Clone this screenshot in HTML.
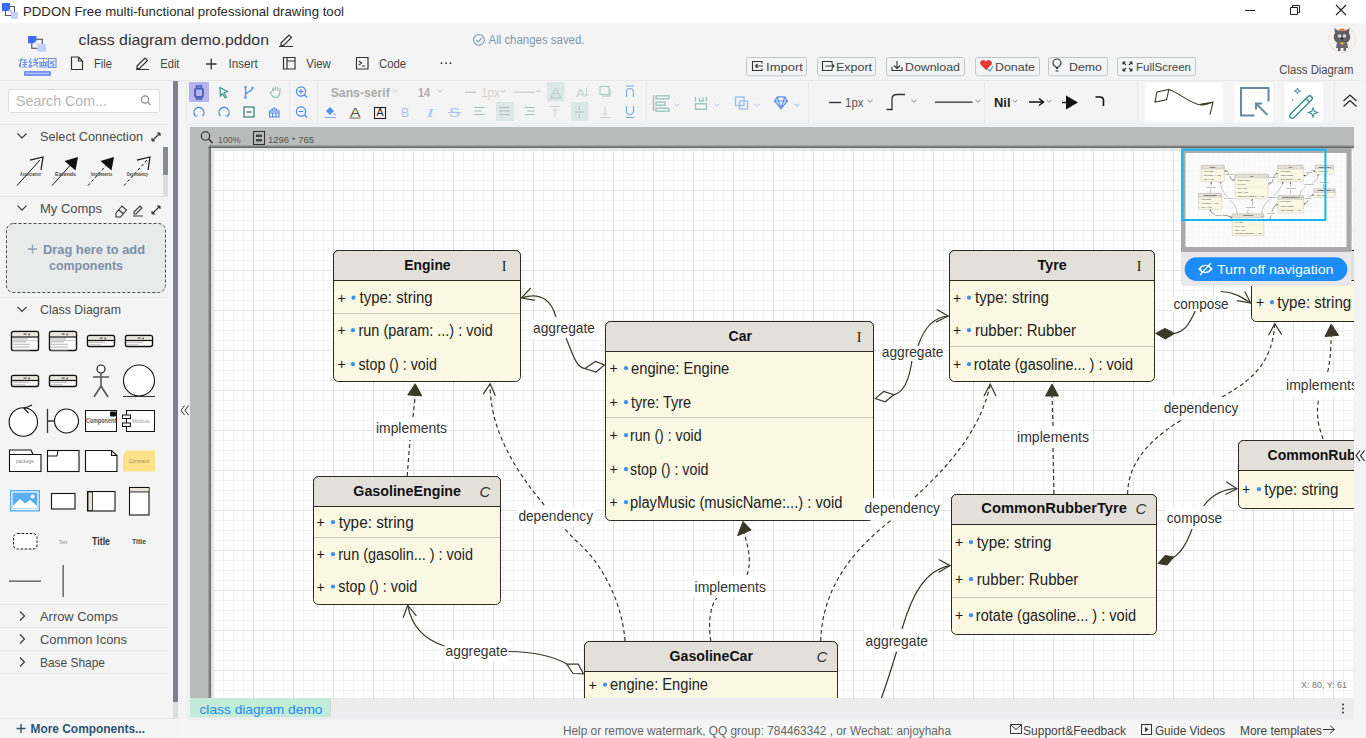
<!DOCTYPE html><html><head><meta charset="utf-8"><style>html,body{margin:0;padding:0;}body{width:1366px;height:738px;overflow:hidden;background:#f4f4f4;position:relative;font-family:"Liberation Sans",sans-serif;}svg{position:absolute;left:0;top:0;}</style></head><body>
<svg width="1366" height="738" viewBox="0 0 1366 738">
<rect width="1366" height="738" fill="#f4f4f4"/>
<rect x="0" y="0" width="1366" height="23" fill="#ffffff"/>
<rect x="5.5" y="6.5" width="9" height="9" fill="none" stroke="#555" stroke-width="1"/>
<rect x="2" y="3" width="8" height="8" fill="#3a6cf4"/>
<rect x="11" y="12" width="7" height="7" fill="#c3d0fb"/>
<path d="M9,10 L12,13" stroke="#c3d0fb" stroke-width="3"/>
<text x="23.0" y="16.0" font-family="Liberation Sans" font-size="13" font-weight="normal" font-style="normal" fill="#2a2a2a" textLength="321.0" lengthAdjust="spacingAndGlyphs">PDDON Free multi-functional professional drawing tool</text>
<rect x="1245" y="10" width="10" height="1" fill="#222"/>
<path d="M1290.5,7.5 h7 v7 h-7 z M1292.5,7.5 v-2 h7 v7 h-2" fill="none" stroke="#222" stroke-width="1"/>
<path d="M1336,5 L1346,15 M1346,5 L1336,15" stroke="#222" stroke-width="1.1"/>
<rect x="31.8" y="39.3" width="10.5" height="9" fill="none" stroke="#5a5a6a" stroke-width="1.2"/>
<path d="M28,36 H36.4 V41 Q36.4,43.2 34,43.2 H28 Z" fill="#3b6df2"/>
<path d="M35,42 L40,47" stroke="#dfe6fc" stroke-width="3"/>
<rect x="37.4" y="44" width="8.5" height="7.7" fill="#c0cffb"/>
<path d="M18.5,60 H27 M22,58 L19,66.5 M20.5,63 V67.5 M22.5,62.5 H27 M24.8,60.5 V67 M22.5,64.5 H27 M22,67 H27.5" fill="none" stroke="#6e8ff0" stroke-width="1.1"/>
<path d="M31,58.5 L29,62 L31.5,62 L29,66 L32,65.5 M29,67.5 L32.5,66.5 M33,60 H37.5 M33,62.5 H38 M35,58 L37.5,67.5 M33,66 L38,63 M37,58.5 L38,59.5" fill="none" stroke="#6e8ff0" stroke-width="1.1"/>
<path d="M39,58.5 H47.5 M40,61 V67 H47 V61 M41.5,62.5 H45.5 V65.5 H41.5 Z M43.5,60 V66" fill="none" stroke="#6e8ff0" stroke-width="1.1"/>
<path d="M48.5,58.5 H56 V67.5 H48.5 Z M50,61 L54.5,65.5 M54.5,60.5 L50,64 M50.5,66 H54" fill="none" stroke="#6e8ff0" stroke-width="1.1"/>
<rect x="24" y="71" width="27" height="5" rx="1" fill="#7293f2"/>
<rect x="26" y="72.8" width="23" height="1.2" fill="#b9c9f8"/>
<text x="78.5" y="45.0" font-family="Liberation Sans" font-size="15.5" font-weight="normal" font-style="normal" fill="#333" textLength="190.5" lengthAdjust="spacingAndGlyphs">class diagram demo.pddon</text>
<path d="M281,43 L289,35 L291.5,37.5 L283.5,45.5 L281,45.5 Z M279,46.5 H293" fill="none" stroke="#333" stroke-width="1.2"/>
<path d="M71.5,57 H78.5 L82.5,61 V69.5 H71.5 Z M78.5,57 V61 H82.5" fill="none" stroke="#333" stroke-width="1.2"/>
<text x="94.0" y="68.0" font-family="Liberation Sans" font-size="12.5" font-weight="normal" font-style="normal" fill="#444" textLength="18.0" lengthAdjust="spacingAndGlyphs">File</text>
<path d="M137,66 L145,58 L147.5,60.5 L139.5,68.5 L137,68.5 Z M136,69.5 H149" fill="none" stroke="#333" stroke-width="1.2"/>
<text x="160.2" y="68.0" font-family="Liberation Sans" font-size="12.5" font-weight="normal" font-style="normal" fill="#444" textLength="19.3" lengthAdjust="spacingAndGlyphs">Edit</text>
<path d="M206,64 H216.5 M211.2,58.5 V69.5" fill="none" stroke="#333" stroke-width="1.3"/>
<text x="228.4" y="68.0" font-family="Liberation Sans" font-size="12.5" font-weight="normal" font-style="normal" fill="#444" textLength="29.3" lengthAdjust="spacingAndGlyphs">Insert</text>
<path d="M283.5,57.5 H295 V69 H283.5 Z M287,57.5 V69 M287,61 H295" fill="none" stroke="#333" stroke-width="1.2"/>
<text x="306.3" y="68.0" font-family="Liberation Sans" font-size="12.5" font-weight="normal" font-style="normal" fill="#444" textLength="24.5" lengthAdjust="spacingAndGlyphs">View</text>
<path d="M356.5,57.5 H368 V69 H356.5 Z M359,61 L361.5,63 L359,65 M362,66 H365" fill="none" stroke="#333" stroke-width="1.2"/>
<text x="379.0" y="68.0" font-family="Liberation Sans" font-size="12.5" font-weight="normal" font-style="normal" fill="#444" textLength="27.2" lengthAdjust="spacingAndGlyphs">Code</text>
<circle cx="441.5" cy="63.2" r="0.9" fill="#333"/>
<circle cx="446" cy="63.2" r="0.9" fill="#333"/>
<circle cx="450.5" cy="63.2" r="0.9" fill="#333"/>
<circle cx="478.9" cy="39.9" r="5.4" fill="none" stroke="#7f97a8" stroke-width="1.1"/>
<path d="M476.3,40 L478.3,42 L481.6,37.8" fill="none" stroke="#7f97a8" stroke-width="1.1"/>
<text x="488.5" y="44.0" font-family="Liberation Sans" font-size="12" font-weight="normal" font-style="normal" fill="#7f97a8" textLength="96.0" lengthAdjust="spacingAndGlyphs">All changes saved.</text>
<rect x="746.5" y="57.5" width="60" height="18" rx="2" fill="#f3f4f4" stroke="#c3c6c8" stroke-width="1"/>
<rect x="747" y="75.5" width="59" height="1" fill="#e0e2e3"/>
<text x="766.0" y="71.3" font-family="Liberation Sans" font-size="11.8" font-weight="normal" font-style="normal" fill="#444" textLength="37.0" lengthAdjust="spacingAndGlyphs">Import</text>
<rect x="817.5" y="57.5" width="58" height="18" rx="2" fill="#f3f4f4" stroke="#c3c6c8" stroke-width="1"/>
<rect x="818" y="75.5" width="57" height="1" fill="#e0e2e3"/>
<text x="836.0" y="71.3" font-family="Liberation Sans" font-size="11.8" font-weight="normal" font-style="normal" fill="#444" textLength="36.0" lengthAdjust="spacingAndGlyphs">Export</text>
<rect x="886.5" y="57.5" width="78" height="18" rx="2" fill="#f3f4f4" stroke="#c3c6c8" stroke-width="1"/>
<rect x="887" y="75.5" width="77" height="1" fill="#e0e2e3"/>
<text x="905.0" y="71.3" font-family="Liberation Sans" font-size="11.8" font-weight="normal" font-style="normal" fill="#444" textLength="55.0" lengthAdjust="spacingAndGlyphs">Download</text>
<rect x="975.5" y="57.5" width="64" height="18" rx="2" fill="#f3f4f4" stroke="#c3c6c8" stroke-width="1"/>
<rect x="976" y="75.5" width="63" height="1" fill="#e0e2e3"/>
<text x="995.0" y="71.3" font-family="Liberation Sans" font-size="11.8" font-weight="normal" font-style="normal" fill="#444" textLength="40.0" lengthAdjust="spacingAndGlyphs">Donate</text>
<rect x="1048.5" y="57.5" width="59" height="18" rx="2" fill="#f3f4f4" stroke="#c3c6c8" stroke-width="1"/>
<rect x="1049" y="75.5" width="58" height="1" fill="#e0e2e3"/>
<text x="1069.0" y="71.3" font-family="Liberation Sans" font-size="11.8" font-weight="normal" font-style="normal" fill="#444" textLength="33.0" lengthAdjust="spacingAndGlyphs">Demo</text>
<rect x="1117.5" y="57.5" width="78" height="18" rx="2" fill="#f3f4f4" stroke="#c3c6c8" stroke-width="1"/>
<rect x="1118" y="75.5" width="77" height="1" fill="#e0e2e3"/>
<text x="1136.0" y="71.3" font-family="Liberation Sans" font-size="11.8" font-weight="normal" font-style="normal" fill="#444" textLength="55.0" lengthAdjust="spacingAndGlyphs">FullScreen</text>
<path d="M762,63.5 V61.5 H752.5 V70.5 H762 V68.5 M755.5,66 H763 M757.5,64 L755.5,66 L757.5,68" fill="none" stroke="#333" stroke-width="1.1"/>
<path d="M832,63.5 V61.5 H822.5 V70.5 H832 V68.5 M825.5,66 H834 M832,64 L834,66 L832,68" fill="none" stroke="#333" stroke-width="1.1"/>
<path d="M897,61 V68 M894,65.5 L897,68.5 L900,65.5 M892,67 V70.5 H902 V67" fill="none" stroke="#333" stroke-width="1.1"/>
<path d="M986,70 L980.5,64.5 A3,3 0 0 1 986,61.8 A3,3 0 0 1 991.5,64.5 Z" fill="#e53935"/>
<path d="M987,68.5 L990,71 L993,66" fill="none" stroke="#3f9ae8" stroke-width="1.1"/>
<path d="M1056.5,69 V67.5 C1054,66 1053,64.5 1053,63 A4,4 0 0 1 1061,63 C1061,64.5 1060,66 1057.5,67.5 V69 M1055.5,71 H1058.5" fill="none" stroke="#333" stroke-width="1.1"/>
<path d="M1123,62 L1126,65 M1123,62 H1125.5 M1123,62 V64.5 M1132,62 L1129,65 M1132,62 H1129.5 M1132,62 V64.5 M1123,71 L1126,68 M1123,71 H1125.5 M1123,71 V68.5 M1132,71 L1129,68 M1132,71 H1129.5 M1132,71 V68.5" fill="none" stroke="#333" stroke-width="1.1"/>
<circle cx="1342" cy="39" r="13.6" fill="#f6f2f2" stroke="#e8d8d8" stroke-width="0.6"/>
<path d="M1335,33 L1334.5,28 L1338,30.5 H1346 L1349.5,28 L1349,33 Q1352,38 1348,42 L1336,42 Q1332,38 1335,33 Z" fill="#5f5f62"/>
<path d="M1338,30.5 Q1342,26.5 1346,30.5 Z" fill="#e8702a"/>
<circle cx="1339.5" cy="36" r="1.8" fill="#ddd"/><circle cx="1344.5" cy="36" r="1.8" fill="#ddd"/>
<circle cx="1342" cy="38.6" r="0.9" fill="#111"/>
<path d="M1337,42 H1347 L1348,48 H1336 Z" fill="#6a6a6d"/>
<path d="M1339,42.5 L1342,45 L1345,42.5 Z" fill="#e4b23a"/>
<rect x="1338" y="48" width="2.5" height="3" fill="#666"/><rect x="1343.5" y="48" width="2.5" height="3" fill="#666"/>
<text x="1279.3" y="74.0" font-family="Liberation Sans" font-size="12.5" font-weight="normal" font-style="normal" fill="#484848" textLength="74.0" lengthAdjust="spacingAndGlyphs">Class Diagram</text>
<rect x="0" y="80" width="1366" height="1" fill="#e8e8e8"/>
<rect x="180" y="81" width="1186" height="43" fill="#f4f4f4"/>
<rect x="180" y="123" width="1186" height="4" fill="#f0f1f3"/>
<rect x="186" y="82" width="1" height="40" fill="#e9e9e9"/>
<rect x="289" y="82" width="1" height="40" fill="#e9e9e9"/>
<rect x="317" y="82" width="1" height="40" fill="#e9e9e9"/>
<rect x="646" y="82" width="1" height="40" fill="#e9e9e9"/>
<rect x="808" y="82" width="1" height="40" fill="#e9e9e9"/>
<rect x="984" y="82" width="1" height="40" fill="#e9e9e9"/>
<rect x="1137" y="82" width="1" height="40" fill="#e9e9e9"/>
<rect x="1334" y="82" width="1" height="40" fill="#e9e9e9"/>
<rect x="189" y="82" width="20" height="20" fill="#b4b4ee"/>
<rect x="195" y="88.5" width="8" height="8.5" rx="2" fill="none" stroke="#4b60b5" stroke-width="1.8"/>
<path d="M196.5,88 V86 H201.5 V88 M196.5,97.5 V99 H201.5 V97.5" fill="none" stroke="#4b60b5" stroke-width="1.5"/>
<path d="M220,87.5 L227.5,91.5 L224,93 L226.5,97 L225,97.8 L222.5,93.8 L220.5,96 Z" fill="none" stroke="#3e9488" stroke-width="1.2"/>
<path d="M245.5,87 V97.5 M245.5,95 C246,91 252.5,92 252.5,88" fill="none" stroke="#5b8fe8" stroke-width="1.3"/><circle cx="245.5" cy="87" r="1.2" fill="#5b8fe8"/><circle cx="252.5" cy="88" r="1.2" fill="#5b8fe8"/><circle cx="245.5" cy="97.5" r="1.2" fill="#5b8fe8"/>
<path d="M270,93 L273,96.5 Q275,98 278,97 Q280,95 280,91 V88 M277.5,91 V87 M275.5,90.5 V86.5 M273.5,91 V87.5 L272,91.5 L270,93" fill="none" stroke="#8cc0b8" stroke-width="1.1"/>
<circle cx="301" cy="91.5" r="4.6" fill="none" stroke="#4d86e8" stroke-width="1.2"/><path d="M304.3,94.8 L307,97.5" stroke="#4d86e8" stroke-width="1.3"/>
<path d="M298.6,91.5 H303.4" stroke="#4d86e8" stroke-width="1.1"/>
<path d="M301,89.1 V93.9" stroke="#4d86e8" stroke-width="1.1"/>
<circle cx="301" cy="111.5" r="4.6" fill="none" stroke="#4d86e8" stroke-width="1.2"/><path d="M304.3,114.8 L307,117.5" stroke="#4d86e8" stroke-width="1.3"/>
<path d="M298.6,111.5 H303.4" stroke="#4d86e8" stroke-width="1.1"/>
<path d="M195,115.5 A5,5 0 1 1 202.5,116" fill="none" stroke="#4d86e8" stroke-width="1.3"/><path d="M194,114 L195.5,117 L197.5,115" fill="none" stroke="#4d86e8" stroke-width="1"/>
<path d="M220.5,116 A5,5 0 1 1 228,115.5" fill="none" stroke="#4d86e8" stroke-width="1.3"/><path d="M229,114 L227.5,117 L225.5,115" fill="none" stroke="#4d86e8" stroke-width="1"/>
<rect x="244" y="107" width="10" height="10" fill="none" stroke="#3f8a7e" stroke-width="1.3"/><path d="M246.5,112 H251.5" stroke="#3f8a7e" stroke-width="1.5"/>
<path d="M269.5,117 V111 H279 V117 Z M269.5,113 H279 M272.5,113 V117 M276,113 V117 M272,111 V109 H276.5 V111 M274.2,109 V107" fill="none" stroke="#4d86e8" stroke-width="1.1"/>
<text x="330.7" y="96.8" font-family="Liberation Sans" font-size="13" font-weight="bold" font-style="normal" fill="#ababab" textLength="59.1" lengthAdjust="spacingAndGlyphs">Sans-serif</text>
<path d="M393.0,89.7 L395.5,92.3 L398.0,89.7" fill="none" stroke="#bbb" stroke-width="0.9"/>
<text x="418.0" y="96.8" font-family="Liberation Sans" font-size="13" font-weight="bold" font-style="normal" fill="#b5aaa8" textLength="12.2" lengthAdjust="spacingAndGlyphs">14</text>
<path d="M437.5,89.7 L440,92.3 L442.5,89.7" fill="none" stroke="#bbb" stroke-width="0.9"/>
<rect x="465" y="91.5" width="11" height="1.3" fill="#c8c8c8"/>
<text x="481.0" y="97.0" font-family="Liberation Sans" font-size="13" font-weight="normal" font-style="normal" fill="#d9d3cb" textLength="19.0" lengthAdjust="spacingAndGlyphs">1px</text>
<path d="M500.5,89.7 L503,92.3 L505.5,89.7" fill="none" stroke="#bbb" stroke-width="0.9"/>
<rect x="514" y="91.5" width="21" height="1.2" fill="#c8c8c8"/>
<path d="M535.5,89.7 L538,92.3 L540.5,89.7" fill="none" stroke="#bbb" stroke-width="0.9"/>
<rect x="547" y="82" width="17.5" height="19.5" fill="#dde7e6"/>
<text x="550.5" y="97.0" font-family="Liberation Sans" font-size="13" font-weight="normal" font-style="normal" fill="#bcd3d0" textLength="10.5" lengthAdjust="spacingAndGlyphs">A</text>
<rect x="550" y="97.5" width="11" height="1" fill="#a9c6c2"/>
<text x="576.0" y="97.0" font-family="Liberation Sans" font-size="11" font-weight="normal" font-style="normal" fill="#c6d3d3" textLength="9.0" lengthAdjust="spacingAndGlyphs">A</text>
<path d="M586.5,87 V96 M584.5,94 L586.5,96.5 L588.5,94" fill="none" stroke="#c6d3d3" stroke-width="1"/>
<rect x="600" y="86.5" width="9" height="8" fill="none" stroke="#a8cac6" stroke-width="1.1"/><path d="M610,89 V96 H602" fill="none" stroke="#a8cac6" stroke-width="1.1"/>
<path d="M626,86 H634 M626.5,97 V92 A3.5,3.5 0 0 1 633.5,92 V97" fill="none" stroke="#7aa6ea" stroke-width="1.1"/>
<path d="M326,111 L330,107 L334,111 L330,115 Z" fill="#5a90ea"/><path d="M334.5,113 L335.5,115 L333.5,115 Z" fill="#5a90ea"/><rect x="324.7" y="117" width="11" height="1" fill="#7aa6ea"/>
<text x="350.0" y="116.5" font-family="Liberation Sans" font-size="12" font-weight="normal" font-style="normal" fill="#595740" textLength="10.5" lengthAdjust="spacingAndGlyphs">A</text>
<rect x="349.5" y="117.5" width="11" height="1.2" fill="#888070"/>
<rect x="374.5" y="107.5" width="11" height="11" fill="none" stroke="#222" stroke-width="1.1"/>
<text x="376.5" y="116.3" font-family="Liberation Sans" font-size="10" font-weight="normal" font-style="normal" fill="#222" textLength="7.0" lengthAdjust="spacingAndGlyphs">A</text>
<text x="401.0" y="117.0" font-family="Liberation Sans" font-size="12.5" font-weight="normal" font-style="normal" fill="#a9c4f0" textLength="8.0" lengthAdjust="spacingAndGlyphs">B</text>
<text x="426.0" y="117.0" font-family="Liberation Serif" font-size="12.5" font-weight="normal" font-style="italic" fill="#a9c4f0" textLength="8.0" lengthAdjust="spacingAndGlyphs">I</text>
<text x="449.0" y="117.0" font-family="Liberation Sans" font-size="12.5" font-weight="normal" font-style="normal" fill="#a9c4f0" textLength="11.0" lengthAdjust="spacingAndGlyphs">S</text>
<rect x="448" y="112" width="13" height="1" fill="#a9c4f0"/>
<rect x="496" y="102" width="18" height="19" fill="#dde7e6"/><rect x="571" y="102" width="17.5" height="19" fill="#dde7e6"/>
<rect x="474.5" y="107.0" width="10" height="1" fill="#9ebfba"/>
<rect x="474.5" y="110.5" width="7" height="1" fill="#9ebfba"/>
<rect x="474.5" y="114.0" width="10" height="1" fill="#9ebfba"/>
<rect x="499.5" y="107.0" width="10" height="1" fill="#9ebfba"/>
<rect x="499.5" y="110.5" width="10" height="1" fill="#9ebfba"/>
<rect x="499.5" y="114.0" width="10" height="1" fill="#9ebfba"/>
<rect x="524.5" y="107.0" width="10" height="1" fill="#9ebfba"/>
<rect x="527.5" y="110.5" width="7" height="1" fill="#9ebfba"/>
<rect x="524.5" y="114.0" width="10" height="1" fill="#9ebfba"/>
<path d="M550,106.5 H560 M555,109 V117 M552.5,111 L555,108.5 L557.5,111" fill="none" stroke="#c6d3d3" stroke-width="1"/>
<path d="M574.5,112 H584.5 M579.5,106 V110 M579.5,114 V118" fill="none" stroke="#a8c6c2" stroke-width="1"/>
<path d="M600,117.5 H610 M605,106.5 V115 M602.5,113 L605,115.5 L607.5,113" fill="none" stroke="#c6d3d3" stroke-width="1"/>
<path d="M626.5,106 V111 A3.5,3.5 0 0 0 633.5,111 V106 M626,117.5 H634" fill="none" stroke="#7aa6ea" stroke-width="1.1"/>
<path d="M653.5,95 V111" stroke="#94c4bc" stroke-width="1.4"/><rect x="656" y="95.8" width="13" height="3" fill="none" stroke="#94c4bc" stroke-width="1.3"/><rect x="656" y="102.2" width="9" height="3" fill="none" stroke="#94c4bc" stroke-width="1.3"/><rect x="656" y="108.2" width="13" height="3" fill="none" stroke="#94c4bc" stroke-width="1.3"/>
<path d="M674.5,103.7 L677,106.3 L679.5,103.7" fill="none" stroke="#a9c8f0" stroke-width="0.9"/>
<path d="M695.5,97 V101.5 M706.5,97 V101.5 M699.5,97.5 V101 H703 V97.5" fill="none" stroke="#94c4bc" stroke-width="1.3"/><rect x="695.5" y="103.8" width="11" height="5.5" fill="none" stroke="#94c4bc" stroke-width="1.3"/>
<path d="M714.5,103.7 L717,106.3 L719.5,103.7" fill="none" stroke="#a9c8f0" stroke-width="0.9"/>
<rect x="735.5" y="97" width="8.5" height="8.5" fill="none" stroke="#9bbcf0" stroke-width="1.3"/><rect x="739.5" y="101" width="8" height="8" fill="none" stroke="#9bbcf0" stroke-width="1.3"/>
<path d="M754.5,103.7 L757,106.3 L759.5,103.7" fill="none" stroke="#9bbcf0" stroke-width="0.9"/>
<path d="M774.5,101 L777.5,96.8 H784.5 L787.5,101 L781,108.5 Z M774.5,101 H787.5 M778.5,101 L781,108.5 L783.5,101 M777.5,96.8 L778.5,101 M784.5,96.8 L783.5,101" fill="none" stroke="#5a90ea" stroke-width="1.2"/>
<path d="M794.5,103.7 L797,106.3 L799.5,103.7" fill="none" stroke="#7aa6ea" stroke-width="0.9"/>
<rect x="829" y="101.8" width="12" height="1.4" fill="#333"/>
<text x="845.0" y="107.0" font-family="Liberation Sans" font-size="13" font-weight="normal" font-style="normal" fill="#555" textLength="18.5" lengthAdjust="spacingAndGlyphs">1px</text>
<path d="M867.5,99.7 L870,102.3 L872.5,99.7" fill="none" stroke="#888" stroke-width="0.9"/>
<path d="M886.5,109.5 H892 V99 Q892,94.5 897,94.5 H905" fill="none" stroke="#333" stroke-width="1.3"/>
<path d="M911.5,99.7 L914,102.3 L916.5,99.7" fill="none" stroke="#888" stroke-width="0.9"/>
<rect x="935" y="101.5" width="37.5" height="1.3" fill="#333"/>
<path d="M975.5,99.7 L978,102.3 L980.5,99.7" fill="none" stroke="#888" stroke-width="0.9"/>
<text x="994.0" y="107.0" font-family="Liberation Sans" font-size="13" font-weight="bold" font-style="normal" fill="#222" textLength="16.5" lengthAdjust="spacingAndGlyphs">Nil</text>
<path d="M1012.5,99.7 L1015,102.3 L1017.5,99.7" fill="none" stroke="#888" stroke-width="0.9"/>
<path d="M1029,102 H1043 M1039,98.5 L1043.5,102 L1039,105.5" fill="none" stroke="#111" stroke-width="1.4"/>
<path d="M1046.5,99.7 L1049,102.3 L1051.5,99.7" fill="none" stroke="#888" stroke-width="0.9"/>
<path d="M1062,102.5 H1068" stroke="#111" stroke-width="1.4"/><path d="M1066,95.5 L1078,102.5 L1066,109.5 Z" fill="#111"/>
<path d="M1095.5,97 H1100 Q1103.5,97 1103.5,100.5 V106" fill="none" stroke="#111" stroke-width="1.6"/>
<rect x="1145" y="83" width="78" height="38" fill="#ffffff"/>
<path d="M1155,102.1 L1157,91.9 L1168.9,89.5 L1166.5,99.8 Z M1168.9,89.5 C1180,93 1190,104 1201,105 C1206,105.5 1210,103 1213,102.1 M1210,114.6 L1213,102.1 L1200.4,104.3" fill="none" stroke="#3b3a22" stroke-width="1.1"/>
<rect x="1234.5" y="83" width="38.5" height="38" fill="#ffffff"/>
<path d="M1268.5,101.5 V88 H1241 V115.5 H1254.5" fill="none" stroke="#6688a0" stroke-width="2"/><path d="M1267.5,115 L1257,104.5 M1256,109.5 V103.5 H1262" fill="none" stroke="#6688a0" stroke-width="2"/>
<rect x="1284.5" y="83" width="38.5" height="38" fill="#ffffff"/>
<path d="M1290.5,114 L1308,96.5 A2,2 0 0 1 1311.5,100 L1294,117.5 A2,2 0 0 1 1290.5,114 Z M1306,98.5 L1309.5,102" fill="none" stroke="#3a8f92" stroke-width="1.4"/>
<path d="M1297.5,88 L1298.3,90.2 L1300.5,91 L1298.3,91.8 L1297.5,94 L1296.7,91.8 L1294.5,91 L1296.7,90.2 Z" fill="none" stroke="#3a8f92" stroke-width="1"/>
<path d="M1313,108 L1314.2,111.3 L1317.5,112.5 L1314.2,113.7 L1313,117 L1311.8,113.7 L1308.5,112.5 L1311.8,111.3 Z" fill="none" stroke="#3a8f92" stroke-width="1.1"/>
<circle cx="1292.5" cy="100" r="0.8" fill="#3a8f92"/>
<path d="M1343.5,101 L1350,95 L1356.5,101 M1343.5,106.5 L1350,100.5 L1356.5,106.5" fill="none" stroke="#222" stroke-width="1.2"/>
<rect x="0" y="81" width="173" height="637" fill="#f4f4f4"/>
<rect x="8.5" y="89.5" width="151" height="23" rx="2" fill="#ffffff" stroke="#dcdcdc" stroke-width="1"/>
<text x="16.0" y="106.0" font-family="Liberation Sans" font-size="14.5" font-weight="normal" font-style="normal" fill="#b5b5b5" textLength="91.0" lengthAdjust="spacingAndGlyphs">Search Com...</text>
<circle cx="145" cy="99.5" r="3.6" fill="none" stroke="#888" stroke-width="1.1"/><path d="M147.6,102.1 L150.5,105" stroke="#888" stroke-width="1.2"/>
<rect x="0" y="124" width="168" height="1" fill="#e3e3e3"/>
<rect x="0" y="196" width="168" height="1" fill="#e3e3e3"/>
<rect x="0" y="297" width="168" height="1" fill="#e3e3e3"/>
<rect x="0" y="604" width="168" height="1" fill="#e3e3e3"/>
<rect x="0" y="627" width="168" height="1" fill="#e3e3e3"/>
<rect x="0" y="650" width="168" height="1" fill="#e3e3e3"/>
<rect x="0" y="673" width="168" height="1" fill="#e3e3e3"/>
<path d="M17.5,133.5 L22,138.0 L26.5,133.5" fill="none" stroke="#333" stroke-width="1.1"/>
<text x="40.0" y="141.0" font-family="Liberation Sans" font-size="13" font-weight="normal" font-style="normal" fill="#4a4a4a" textLength="103.0" lengthAdjust="spacingAndGlyphs">Select Connection</text>
<path d="M152,141 L160,133 M152,141 V138 M152,141 H155 M160,133 V136 M160,133 H157" fill="none" stroke="#333" stroke-width="1.1"/>
<rect x="163" y="147" width="5" height="49" fill="#dcdcdc"/><rect x="163" y="147" width="5" height="28" fill="#8a8a92"/>
<path d="M17,185.6 L40,160" stroke="#111" stroke-width="1"/><path d="M30,160.2 L43,157 L41,170" fill="none" stroke="#111" stroke-width="1.2"/><text x="20.0" y="176.0" font-family="Liberation Sans" font-size="5.5" font-weight="bold" font-style="normal" fill="#444" textLength="21.0" lengthAdjust="spacingAndGlyphs">Association</text>
<path d="M52,185.6 L75,160" stroke="#111" stroke-width="1"/><path d="M64.5,161 L78,157 L75.5,170.5 Z" fill="#111"/><text x="55.0" y="176.0" font-family="Liberation Sans" font-size="5.5" font-weight="bold" font-style="normal" fill="#444" textLength="21.0" lengthAdjust="spacingAndGlyphs">Extends</text>
<path d="M88,185.6 L111,160" stroke="#111" stroke-width="1" stroke-dasharray="3,2.2"/><path d="M100.5,161 L114,157 L111.5,170.5 Z" fill="#111"/><text x="91.0" y="176.0" font-family="Liberation Sans" font-size="5.5" font-weight="bold" font-style="normal" fill="#444" textLength="21.0" lengthAdjust="spacingAndGlyphs">Implements</text>
<path d="M124,185.6 L147,160" stroke="#111" stroke-width="1" stroke-dasharray="3,2.2"/><path d="M137,160.2 L150,157 L148,170" fill="none" stroke="#111" stroke-width="1.2"/><text x="127.0" y="176.0" font-family="Liberation Sans" font-size="5.5" font-weight="bold" font-style="normal" fill="#444" textLength="21.0" lengthAdjust="spacingAndGlyphs">Dependency</text>
<path d="M17.5,205.7 L22,210.2 L26.5,205.7" fill="none" stroke="#333" stroke-width="1.1"/>
<text x="40.0" y="213.2" font-family="Liberation Sans" font-size="13" font-weight="normal" font-style="normal" fill="#4a4a4a" textLength="62.0" lengthAdjust="spacingAndGlyphs">My Comps</text>
<path d="M116,213 L122,206 L126.5,210 L120.5,217 H116 Z M119,210 L123.5,214" fill="none" stroke="#333" stroke-width="1.1"/>
<path d="M134,212 L140,206 L142,208 L136,214 H134 Z M133,216 H143" fill="none" stroke="#333" stroke-width="1.1"/>
<path d="M152,214 L160,206 M152,214 V211 M152,214 H155 M160,206 V209 M160,206 H157" fill="none" stroke="#333" stroke-width="1.1"/>
<rect x="6.5" y="223.5" width="159" height="69" rx="7" fill="#e9eaea" stroke="#4a4a4a" stroke-width="1" stroke-dasharray="3,2"/>
<path d="M28,249 H37 M32.5,244.5 V253.5" stroke="#8d9fb0" stroke-width="1.3"/>
<text x="43.0" y="254.0" font-family="Liberation Sans" font-size="13" font-weight="bold" font-style="normal" fill="#7b90a8" textLength="102.0" lengthAdjust="spacingAndGlyphs">Drag here to add</text>
<text x="49.0" y="270.0" font-family="Liberation Sans" font-size="13" font-weight="bold" font-style="normal" fill="#7b90a8" textLength="74.0" lengthAdjust="spacingAndGlyphs">components</text>
<path d="M17.5,306.9 L22,311.4 L26.5,306.9" fill="none" stroke="#333" stroke-width="1.1"/>
<text x="40.0" y="314.4" font-family="Liberation Sans" font-size="13" font-weight="normal" font-style="normal" fill="#4a4a4a" textLength="81.0" lengthAdjust="spacingAndGlyphs">Class Diagram</text>
<rect x="11.5" y="331.5" width="27.0" height="19.0" rx="2" fill="#fff" stroke="#111" stroke-width="1.4"/><rect x="12.5" y="332.5" width="25.0" height="4.0" fill="#e9e5dc"/><rect x="23.65" y="333.5" width="3" height="1.2" fill="#555"/><rect x="28.24" y="333.7" width="1.8" height="1.5" fill="#555"/><rect x="11.5" y="336.4" width="27.0" height="1.2" fill="#111"/><rect x="12.5" y="340.5" width="25.0" height="0.6" fill="#aaa"/><rect x="13.0" y="338.3" width="15" height="1.3" fill="#c4c4c4"/><rect x="13.0" y="341.0" width="13" height="1.3" fill="#c4c4c4"/><rect x="13.0" y="343.7" width="17" height="1.3" fill="#c4c4c4"/><rect x="13.0" y="346.40000000000003" width="17" height="1.3" fill="#c4c4c4"/><rect x="13.0" y="349.1" width="17" height="1.3" fill="#c4c4c4"/>
<rect x="49.5" y="331.5" width="27.0" height="19.0" rx="2" fill="#fff" stroke="#111" stroke-width="1.4"/><rect x="50.5" y="332.5" width="25.0" height="4.0" fill="#e9e5dc"/><rect x="61.65" y="333.5" width="3" height="1.2" fill="#555"/><rect x="66.24" y="333.7" width="1.8" height="1.5" fill="#555"/><rect x="49.5" y="336.4" width="27.0" height="1.2" fill="#111"/><rect x="50.5" y="340.5" width="25.0" height="0.6" fill="#aaa"/><rect x="51.0" y="338.3" width="15" height="1.3" fill="#c4c4c4"/><rect x="51.0" y="341.0" width="13" height="1.3" fill="#c4c4c4"/><rect x="51.0" y="343.7" width="17" height="1.3" fill="#c4c4c4"/><rect x="51.0" y="346.40000000000003" width="17" height="1.3" fill="#c4c4c4"/><rect x="51.0" y="349.1" width="17" height="1.3" fill="#c4c4c4"/>
<rect x="87.5" y="335.5" width="27.0" height="11.0" rx="2" fill="#fff" stroke="#111" stroke-width="1.4"/><rect x="88.5" y="336.5" width="25.0" height="3.5" fill="#e9e5dc"/><rect x="99.65" y="337.5" width="3" height="1.2" fill="#555"/><rect x="104.24" y="337.7" width="1.8" height="1.5" fill="#555"/><rect x="87.5" y="339.9" width="27.0" height="1.2" fill="#111"/><rect x="89.0" y="341.8" width="16" height="1.3" fill="#c4c4c4"/><rect x="89.0" y="344.2" width="12" height="1.3" fill="#c4c4c4"/>
<rect x="125.5" y="335.5" width="27.0" height="11.0" rx="2" fill="#fff" stroke="#111" stroke-width="1.4"/><rect x="126.5" y="336.5" width="25.0" height="3.5" fill="#e9e5dc"/><rect x="137.65" y="337.5" width="3" height="1.2" fill="#555"/><rect x="142.24" y="337.7" width="1.8" height="1.5" fill="#555"/><rect x="125.5" y="339.9" width="27.0" height="1.2" fill="#111"/><rect x="127.0" y="341.8" width="16" height="1.3" fill="#c4c4c4"/><rect x="127.0" y="344.2" width="12" height="1.3" fill="#c4c4c4"/>
<rect x="11.5" y="375.5" width="27.0" height="11.0" rx="2" fill="#fff" stroke="#111" stroke-width="1.4"/><rect x="12.5" y="376.5" width="25.0" height="3.5" fill="#e9e5dc"/><rect x="23.65" y="377.5" width="3" height="1.2" fill="#555"/><rect x="28.24" y="377.7" width="1.8" height="1.5" fill="#555"/><rect x="11.5" y="379.9" width="27.0" height="1.2" fill="#111"/><rect x="13.0" y="381.8" width="16" height="1.3" fill="#c4c4c4"/><rect x="13.0" y="384.2" width="12" height="1.3" fill="#c4c4c4"/>
<rect x="49.5" y="375.5" width="27.0" height="11.0" rx="2" fill="#fff" stroke="#111" stroke-width="1.4"/><rect x="50.5" y="376.5" width="25.0" height="3.5" fill="#e9e5dc"/><rect x="61.65" y="377.5" width="3" height="1.2" fill="#555"/><rect x="66.24" y="377.7" width="1.8" height="1.5" fill="#555"/><rect x="49.5" y="379.9" width="27.0" height="1.2" fill="#111"/><rect x="51.0" y="381.8" width="16" height="1.3" fill="#c4c4c4"/><rect x="51.0" y="384.2" width="12" height="1.3" fill="#c4c4c4"/>
<circle cx="101" cy="369" r="4" fill="#fff" stroke="#111" stroke-width="1.1"/><path d="M101,373 V386 M93,377 H109 M101,386 L94,397 M101,386 L108,397" fill="none" stroke="#555" stroke-width="1.6"/>
<circle cx="139" cy="380.5" r="15.5" fill="#fff" stroke="#111" stroke-width="1.1"/><rect x="123" y="396" width="32" height="1" fill="#333"/>
<circle cx="23.3" cy="422" r="14.2" fill="#fff" stroke="#111" stroke-width="1.1"/><path d="M32,405 L24,408.5 L28.5,413" fill="none" stroke="#111" stroke-width="1.1"/>
<circle cx="66.5" cy="421" r="12" fill="#fff" stroke="#111" stroke-width="1.1"/><path d="M47.5,409 V433 M47.5,421 H54.5" fill="none" stroke="#333" stroke-width="1.3"/>
<rect x="85.5" y="410.5" width="31" height="21" fill="#fff" stroke="#111" stroke-width="1"/><rect x="110" y="411.5" width="6" height="5" rx="1" fill="#111"/>
<text x="86.0" y="423.0" font-family="Liberation Sans" font-size="7" font-weight="bold" font-style="normal" fill="#555" textLength="30.0" lengthAdjust="spacingAndGlyphs">Component</text>
<rect x="126.5" y="410.5" width="28" height="21" fill="#fff" stroke="#111" stroke-width="1"/><rect x="122.5" y="415" width="8" height="3.5" fill="#fff" stroke="#111" stroke-width="1"/><rect x="122.5" y="423" width="8" height="3.5" fill="#fff" stroke="#111" stroke-width="1"/>
<text x="132.0" y="423.0" font-family="Liberation Sans" font-size="5" font-weight="normal" font-style="normal" fill="#999" textLength="18.0" lengthAdjust="spacingAndGlyphs">Module</text>
<path d="M9.5,471.5 V454.5 H41 V471.5 Z M9.5,454.5 V450 H31 L33,454.5" fill="#fff" stroke="#111" stroke-width="1.1"/>
<text x="16.0" y="463.0" font-family="Liberation Sans" font-size="5" font-weight="normal" font-style="normal" fill="#888" textLength="18.0" lengthAdjust="spacingAndGlyphs">package</text>
<rect x="47.5" y="450.5" width="31.5" height="21" fill="#fff" stroke="#111" stroke-width="1.1"/><path d="M47.5,456 H57 L58,450.5" fill="none" stroke="#111" stroke-width="1"/>
<path d="M85.5,450.5 H111.5 L117,455.5 V471.5 H85.5 Z M111.5,450.5 V455.5 H117" fill="#fff" stroke="#111" stroke-width="1.1"/>
<path d="M127,450.5 H155 V471.5 H123 V454.5 Z" fill="#fde28a"/>
<text x="129.0" y="462.5" font-family="Liberation Sans" font-size="5" font-weight="normal" font-style="normal" fill="#9a8a55" textLength="20.0" lengthAdjust="spacingAndGlyphs">Comment</text>
<rect x="10" y="490" width="30" height="21.5" fill="#58abf0"/><rect x="12" y="492" width="26" height="17.5" fill="#5aaef3" stroke="#fff" stroke-width="1.2"/>
<path d="M13,506 L20,499 L25,503.5 L30,500 L37,506 V508.5 H13 Z" fill="#fff"/><circle cx="32.5" cy="496.5" r="2" fill="#fff"/>
<rect x="51.5" y="493.5" width="23.5" height="15.5" fill="#fff" stroke="#111" stroke-width="1.1"/>
<rect x="87.5" y="491.5" width="27.5" height="19.5" fill="#fff" stroke="#111" stroke-width="1.1"/><rect x="88" y="492" width="4.5" height="18.5" fill="#e6e2d6" stroke="#111" stroke-width="0.8"/>
<rect x="129.5" y="487.5" width="19.5" height="27.5" fill="#fff" stroke="#111" stroke-width="1.1"/><rect x="130" y="488" width="18.5" height="3.5" fill="#e6e2d6"/><rect x="129.5" y="491.5" width="19.5" height="0.9" fill="#111"/>
<rect x="13.5" y="533.5" width="23.5" height="15.5" rx="4" fill="#fff" stroke="#111" stroke-width="1" stroke-dasharray="2.5,1.6"/>
<text x="59.0" y="544.0" font-family="Liberation Sans" font-size="5" font-weight="normal" font-style="normal" fill="#888" textLength="8.0" lengthAdjust="spacingAndGlyphs">Text</text>
<text x="92.0" y="545.0" font-family="Liberation Sans" font-size="10" font-weight="bold" font-style="normal" fill="#333" textLength="18.0" lengthAdjust="spacingAndGlyphs">Title</text>
<text x="132.0" y="544.0" font-family="Liberation Sans" font-size="8" font-weight="bold" font-style="normal" fill="#444" textLength="14.0" lengthAdjust="spacingAndGlyphs">Title</text>
<rect x="9" y="580.5" width="32" height="1.3" fill="#555"/><rect x="62.5" y="565" width="1.3" height="32" fill="#555"/>
<path d="M20,611.5 L24.5,616 L20,620.5" fill="none" stroke="#333" stroke-width="1.1"/>
<text x="40.0" y="620.5" font-family="Liberation Sans" font-size="13" font-weight="normal" font-style="normal" fill="#4a4a4a" textLength="78.0" lengthAdjust="spacingAndGlyphs">Arrow Comps</text>
<path d="M20,634.5 L24.5,639 L20,643.5" fill="none" stroke="#333" stroke-width="1.1"/>
<text x="40.0" y="643.5" font-family="Liberation Sans" font-size="13" font-weight="normal" font-style="normal" fill="#4a4a4a" textLength="87.0" lengthAdjust="spacingAndGlyphs">Common Icons</text>
<path d="M20,657.5 L24.5,662 L20,666.5" fill="none" stroke="#333" stroke-width="1.1"/>
<text x="40.0" y="666.5" font-family="Liberation Sans" font-size="13" font-weight="normal" font-style="normal" fill="#4a4a4a" textLength="65.0" lengthAdjust="spacingAndGlyphs">Base Shape</text>
<rect x="173" y="81" width="5" height="621" fill="#807f8c"/>
<rect x="173" y="702" width="5" height="16" fill="#dedede"/>
<rect x="178" y="124" width="12" height="594" fill="#f4f4f4"/><rect x="186" y="124" width="4" height="594" fill="#eff0f3"/>
<path d="M184.5,405.5 L181,410.3 L184.5,415 M188.5,405.5 L185,410.3 L188.5,415" fill="none" stroke="#333" stroke-width="1"/>
<rect x="0" y="718" width="178" height="1" fill="#e3e3e3"/>
<rect x="0" y="719" width="178" height="19" fill="#f4f4f4"/>
<path d="M16.5,728.5 H25.5 M21,724 V733" stroke="#2c5574" stroke-width="1.4"/>
<text x="30.5" y="733.0" font-family="Liberation Sans" font-size="12.5" font-weight="bold" font-style="normal" fill="#2c5574" textLength="114.5" lengthAdjust="spacingAndGlyphs">More Components...</text>
<rect x="190" y="698" width="1164" height="20" fill="#ececec"/>
<rect x="190" y="698" width="140" height="19" fill="#c3ebd9"/>
<rect x="330" y="698" width="1" height="19" fill="#d8d8d8"/>
<text x="199.5" y="714.0" font-family="Liberation Sans" font-size="13.5" font-weight="normal" font-style="normal" fill="#1e8bf5" textLength="123.0" lengthAdjust="spacingAndGlyphs">class diagram demo</text>
<circle cx="1343" cy="704.5" r="1" fill="#333"/><circle cx="1343" cy="708.5" r="1" fill="#333"/><circle cx="1343" cy="712.5" r="1" fill="#333"/>
<rect x="1354" y="124" width="12" height="594" fill="#f4f4f4"/>
<rect x="178" y="718" width="1188" height="20" fill="#f5f5f5"/>
<rect x="186" y="718" width="1168" height="2" fill="#eceef2"/>
<text x="563.0" y="735.0" font-family="Liberation Sans" font-size="12" font-weight="normal" font-style="normal" fill="#666" textLength="388.0" lengthAdjust="spacingAndGlyphs">Help or remove watermark, QQ group: 784463342 , or Wechat: anjoyhaha</text>
<path d="M1010.5,724.5 H1021.5 V733.5 H1010.5 Z M1010.5,724.5 L1016,729.5 L1021.5,724.5" fill="none" stroke="#333" stroke-width="1"/>
<text x="1023.0" y="735.0" font-family="Liberation Sans" font-size="12.5" font-weight="normal" font-style="normal" fill="#444" textLength="103.0" lengthAdjust="spacingAndGlyphs">Support&amp;Feedback</text>
<rect x="1141.5" y="724.5" width="10" height="10" fill="none" stroke="#333" stroke-width="1"/><path d="M1145,727 L1148.5,729.5 L1145,732 Z" fill="#333"/>
<text x="1155.0" y="735.0" font-family="Liberation Sans" font-size="12.5" font-weight="normal" font-style="normal" fill="#444" textLength="70.0" lengthAdjust="spacingAndGlyphs">Guide Videos</text>
<text x="1240.0" y="735.0" font-family="Liberation Sans" font-size="12.5" font-weight="normal" font-style="normal" fill="#444" textLength="82.0" lengthAdjust="spacingAndGlyphs">More templates</text>
<path d="M1323,729.5 H1334 M1330,725.5 L1334.5,729.5 L1330,733.5" fill="none" stroke="#333" stroke-width="1"/>
<rect x="190" y="127" width="1164" height="571" fill="#b9bcbb"/>
<defs><linearGradient id="shv" x1="0" x2="1" y1="0" y2="0"><stop offset="0" stop-color="#b9bcbb"/><stop offset="1" stop-color="#5a5c5b"/></linearGradient><linearGradient id="shh" x1="0" x2="0" y1="0" y2="1"><stop offset="0" stop-color="#b9bcbb"/><stop offset="1" stop-color="#5a5c5b"/></linearGradient></defs>
<rect x="211" y="144.5" width="1143" height="3.5" fill="url(#shh)"/>
<rect x="207.5" y="148" width="3.5" height="550" fill="url(#shv)"/>
<path d="M207.5,148 L211,144.5 L211,148 Z" fill="#6a6c6b"/>
<rect x="211" y="148" width="1143" height="550" fill="#e6e6e6"/>
<rect x="214" y="151" width="1140" height="547" fill="#ffffff"/>
<rect x="223" y="151" width="1" height="547" fill="#f1f1f1"/>
<rect x="233" y="151" width="1" height="547" fill="#f1f1f1"/>
<rect x="243" y="151" width="1" height="547" fill="#f1f1f1"/>
<rect x="263" y="151" width="1" height="547" fill="#f1f1f1"/>
<rect x="273" y="151" width="1" height="547" fill="#f1f1f1"/>
<rect x="283" y="151" width="1" height="547" fill="#f1f1f1"/>
<rect x="303" y="151" width="1" height="547" fill="#f1f1f1"/>
<rect x="313" y="151" width="1" height="547" fill="#f1f1f1"/>
<rect x="323" y="151" width="1" height="547" fill="#f1f1f1"/>
<rect x="343" y="151" width="1" height="547" fill="#f1f1f1"/>
<rect x="353" y="151" width="1" height="547" fill="#f1f1f1"/>
<rect x="363" y="151" width="1" height="547" fill="#f1f1f1"/>
<rect x="383" y="151" width="1" height="547" fill="#f1f1f1"/>
<rect x="393" y="151" width="1" height="547" fill="#f1f1f1"/>
<rect x="403" y="151" width="1" height="547" fill="#f1f1f1"/>
<rect x="423" y="151" width="1" height="547" fill="#f1f1f1"/>
<rect x="433" y="151" width="1" height="547" fill="#f1f1f1"/>
<rect x="443" y="151" width="1" height="547" fill="#f1f1f1"/>
<rect x="463" y="151" width="1" height="547" fill="#f1f1f1"/>
<rect x="473" y="151" width="1" height="547" fill="#f1f1f1"/>
<rect x="483" y="151" width="1" height="547" fill="#f1f1f1"/>
<rect x="503" y="151" width="1" height="547" fill="#f1f1f1"/>
<rect x="513" y="151" width="1" height="547" fill="#f1f1f1"/>
<rect x="523" y="151" width="1" height="547" fill="#f1f1f1"/>
<rect x="543" y="151" width="1" height="547" fill="#f1f1f1"/>
<rect x="553" y="151" width="1" height="547" fill="#f1f1f1"/>
<rect x="563" y="151" width="1" height="547" fill="#f1f1f1"/>
<rect x="583" y="151" width="1" height="547" fill="#f1f1f1"/>
<rect x="593" y="151" width="1" height="547" fill="#f1f1f1"/>
<rect x="603" y="151" width="1" height="547" fill="#f1f1f1"/>
<rect x="623" y="151" width="1" height="547" fill="#f1f1f1"/>
<rect x="633" y="151" width="1" height="547" fill="#f1f1f1"/>
<rect x="643" y="151" width="1" height="547" fill="#f1f1f1"/>
<rect x="663" y="151" width="1" height="547" fill="#f1f1f1"/>
<rect x="673" y="151" width="1" height="547" fill="#f1f1f1"/>
<rect x="683" y="151" width="1" height="547" fill="#f1f1f1"/>
<rect x="703" y="151" width="1" height="547" fill="#f1f1f1"/>
<rect x="713" y="151" width="1" height="547" fill="#f1f1f1"/>
<rect x="723" y="151" width="1" height="547" fill="#f1f1f1"/>
<rect x="743" y="151" width="1" height="547" fill="#f1f1f1"/>
<rect x="753" y="151" width="1" height="547" fill="#f1f1f1"/>
<rect x="763" y="151" width="1" height="547" fill="#f1f1f1"/>
<rect x="783" y="151" width="1" height="547" fill="#f1f1f1"/>
<rect x="793" y="151" width="1" height="547" fill="#f1f1f1"/>
<rect x="803" y="151" width="1" height="547" fill="#f1f1f1"/>
<rect x="823" y="151" width="1" height="547" fill="#f1f1f1"/>
<rect x="833" y="151" width="1" height="547" fill="#f1f1f1"/>
<rect x="843" y="151" width="1" height="547" fill="#f1f1f1"/>
<rect x="863" y="151" width="1" height="547" fill="#f1f1f1"/>
<rect x="873" y="151" width="1" height="547" fill="#f1f1f1"/>
<rect x="883" y="151" width="1" height="547" fill="#f1f1f1"/>
<rect x="903" y="151" width="1" height="547" fill="#f1f1f1"/>
<rect x="913" y="151" width="1" height="547" fill="#f1f1f1"/>
<rect x="923" y="151" width="1" height="547" fill="#f1f1f1"/>
<rect x="943" y="151" width="1" height="547" fill="#f1f1f1"/>
<rect x="953" y="151" width="1" height="547" fill="#f1f1f1"/>
<rect x="963" y="151" width="1" height="547" fill="#f1f1f1"/>
<rect x="983" y="151" width="1" height="547" fill="#f1f1f1"/>
<rect x="993" y="151" width="1" height="547" fill="#f1f1f1"/>
<rect x="1003" y="151" width="1" height="547" fill="#f1f1f1"/>
<rect x="1023" y="151" width="1" height="547" fill="#f1f1f1"/>
<rect x="1033" y="151" width="1" height="547" fill="#f1f1f1"/>
<rect x="1043" y="151" width="1" height="547" fill="#f1f1f1"/>
<rect x="1063" y="151" width="1" height="547" fill="#f1f1f1"/>
<rect x="1073" y="151" width="1" height="547" fill="#f1f1f1"/>
<rect x="1083" y="151" width="1" height="547" fill="#f1f1f1"/>
<rect x="1103" y="151" width="1" height="547" fill="#f1f1f1"/>
<rect x="1113" y="151" width="1" height="547" fill="#f1f1f1"/>
<rect x="1123" y="151" width="1" height="547" fill="#f1f1f1"/>
<rect x="1143" y="151" width="1" height="547" fill="#f1f1f1"/>
<rect x="1153" y="151" width="1" height="547" fill="#f1f1f1"/>
<rect x="1163" y="151" width="1" height="547" fill="#f1f1f1"/>
<rect x="1183" y="151" width="1" height="547" fill="#f1f1f1"/>
<rect x="1193" y="151" width="1" height="547" fill="#f1f1f1"/>
<rect x="1203" y="151" width="1" height="547" fill="#f1f1f1"/>
<rect x="1223" y="151" width="1" height="547" fill="#f1f1f1"/>
<rect x="1233" y="151" width="1" height="547" fill="#f1f1f1"/>
<rect x="1243" y="151" width="1" height="547" fill="#f1f1f1"/>
<rect x="1263" y="151" width="1" height="547" fill="#f1f1f1"/>
<rect x="1273" y="151" width="1" height="547" fill="#f1f1f1"/>
<rect x="1283" y="151" width="1" height="547" fill="#f1f1f1"/>
<rect x="1303" y="151" width="1" height="547" fill="#f1f1f1"/>
<rect x="1313" y="151" width="1" height="547" fill="#f1f1f1"/>
<rect x="1323" y="151" width="1" height="547" fill="#f1f1f1"/>
<rect x="1343" y="151" width="1" height="547" fill="#f1f1f1"/>
<rect x="1353" y="151" width="1" height="547" fill="#f1f1f1"/>
<rect x="214" y="160" width="1140" height="1" fill="#f1f1f1"/>
<rect x="214" y="170" width="1140" height="1" fill="#f1f1f1"/>
<rect x="214" y="180" width="1140" height="1" fill="#f1f1f1"/>
<rect x="214" y="200" width="1140" height="1" fill="#f1f1f1"/>
<rect x="214" y="210" width="1140" height="1" fill="#f1f1f1"/>
<rect x="214" y="220" width="1140" height="1" fill="#f1f1f1"/>
<rect x="214" y="240" width="1140" height="1" fill="#f1f1f1"/>
<rect x="214" y="250" width="1140" height="1" fill="#f1f1f1"/>
<rect x="214" y="260" width="1140" height="1" fill="#f1f1f1"/>
<rect x="214" y="280" width="1140" height="1" fill="#f1f1f1"/>
<rect x="214" y="290" width="1140" height="1" fill="#f1f1f1"/>
<rect x="214" y="300" width="1140" height="1" fill="#f1f1f1"/>
<rect x="214" y="320" width="1140" height="1" fill="#f1f1f1"/>
<rect x="214" y="330" width="1140" height="1" fill="#f1f1f1"/>
<rect x="214" y="340" width="1140" height="1" fill="#f1f1f1"/>
<rect x="214" y="360" width="1140" height="1" fill="#f1f1f1"/>
<rect x="214" y="370" width="1140" height="1" fill="#f1f1f1"/>
<rect x="214" y="380" width="1140" height="1" fill="#f1f1f1"/>
<rect x="214" y="400" width="1140" height="1" fill="#f1f1f1"/>
<rect x="214" y="410" width="1140" height="1" fill="#f1f1f1"/>
<rect x="214" y="420" width="1140" height="1" fill="#f1f1f1"/>
<rect x="214" y="440" width="1140" height="1" fill="#f1f1f1"/>
<rect x="214" y="450" width="1140" height="1" fill="#f1f1f1"/>
<rect x="214" y="460" width="1140" height="1" fill="#f1f1f1"/>
<rect x="214" y="480" width="1140" height="1" fill="#f1f1f1"/>
<rect x="214" y="490" width="1140" height="1" fill="#f1f1f1"/>
<rect x="214" y="500" width="1140" height="1" fill="#f1f1f1"/>
<rect x="214" y="520" width="1140" height="1" fill="#f1f1f1"/>
<rect x="214" y="530" width="1140" height="1" fill="#f1f1f1"/>
<rect x="214" y="540" width="1140" height="1" fill="#f1f1f1"/>
<rect x="214" y="560" width="1140" height="1" fill="#f1f1f1"/>
<rect x="214" y="570" width="1140" height="1" fill="#f1f1f1"/>
<rect x="214" y="580" width="1140" height="1" fill="#f1f1f1"/>
<rect x="214" y="600" width="1140" height="1" fill="#f1f1f1"/>
<rect x="214" y="610" width="1140" height="1" fill="#f1f1f1"/>
<rect x="214" y="620" width="1140" height="1" fill="#f1f1f1"/>
<rect x="214" y="640" width="1140" height="1" fill="#f1f1f1"/>
<rect x="214" y="650" width="1140" height="1" fill="#f1f1f1"/>
<rect x="214" y="660" width="1140" height="1" fill="#f1f1f1"/>
<rect x="214" y="680" width="1140" height="1" fill="#f1f1f1"/>
<rect x="214" y="690" width="1140" height="1" fill="#f1f1f1"/>
<rect x="253" y="151" width="1" height="547" fill="#e2e2e2"/>
<rect x="293" y="151" width="1" height="547" fill="#e2e2e2"/>
<rect x="333" y="151" width="1" height="547" fill="#e2e2e2"/>
<rect x="373" y="151" width="1" height="547" fill="#e2e2e2"/>
<rect x="413" y="151" width="1" height="547" fill="#e2e2e2"/>
<rect x="453" y="151" width="1" height="547" fill="#e2e2e2"/>
<rect x="493" y="151" width="1" height="547" fill="#e2e2e2"/>
<rect x="533" y="151" width="1" height="547" fill="#e2e2e2"/>
<rect x="573" y="151" width="1" height="547" fill="#e2e2e2"/>
<rect x="613" y="151" width="1" height="547" fill="#e2e2e2"/>
<rect x="653" y="151" width="1" height="547" fill="#e2e2e2"/>
<rect x="693" y="151" width="1" height="547" fill="#e2e2e2"/>
<rect x="733" y="151" width="1" height="547" fill="#e2e2e2"/>
<rect x="773" y="151" width="1" height="547" fill="#e2e2e2"/>
<rect x="813" y="151" width="1" height="547" fill="#e2e2e2"/>
<rect x="853" y="151" width="1" height="547" fill="#e2e2e2"/>
<rect x="893" y="151" width="1" height="547" fill="#e2e2e2"/>
<rect x="933" y="151" width="1" height="547" fill="#e2e2e2"/>
<rect x="973" y="151" width="1" height="547" fill="#e2e2e2"/>
<rect x="1013" y="151" width="1" height="547" fill="#e2e2e2"/>
<rect x="1053" y="151" width="1" height="547" fill="#e2e2e2"/>
<rect x="1093" y="151" width="1" height="547" fill="#e2e2e2"/>
<rect x="1133" y="151" width="1" height="547" fill="#e2e2e2"/>
<rect x="1173" y="151" width="1" height="547" fill="#e2e2e2"/>
<rect x="1213" y="151" width="1" height="547" fill="#e2e2e2"/>
<rect x="1253" y="151" width="1" height="547" fill="#e2e2e2"/>
<rect x="1293" y="151" width="1" height="547" fill="#e2e2e2"/>
<rect x="1333" y="151" width="1" height="547" fill="#e2e2e2"/>
<rect x="214" y="190" width="1140" height="1" fill="#e2e2e2"/>
<rect x="214" y="230" width="1140" height="1" fill="#e2e2e2"/>
<rect x="214" y="270" width="1140" height="1" fill="#e2e2e2"/>
<rect x="214" y="310" width="1140" height="1" fill="#e2e2e2"/>
<rect x="214" y="350" width="1140" height="1" fill="#e2e2e2"/>
<rect x="214" y="390" width="1140" height="1" fill="#e2e2e2"/>
<rect x="214" y="430" width="1140" height="1" fill="#e2e2e2"/>
<rect x="214" y="470" width="1140" height="1" fill="#e2e2e2"/>
<rect x="214" y="510" width="1140" height="1" fill="#e2e2e2"/>
<rect x="214" y="550" width="1140" height="1" fill="#e2e2e2"/>
<rect x="214" y="590" width="1140" height="1" fill="#e2e2e2"/>
<rect x="214" y="630" width="1140" height="1" fill="#e2e2e2"/>
<rect x="214" y="670" width="1140" height="1" fill="#e2e2e2"/>
<circle cx="205.5" cy="136" r="4.2" fill="none" stroke="#222" stroke-width="1.1"/><path d="M208.5,139 L212.5,143" stroke="#222" stroke-width="1.2"/>
<text x="218.0" y="142.8" font-family="Liberation Sans" font-size="9" font-weight="normal" font-style="normal" fill="#555" textLength="22.5" lengthAdjust="spacingAndGlyphs">100%</text>
<rect x="253.5" y="131.5" width="11" height="13" fill="none" stroke="#333" stroke-width="1.1"/><rect x="256" y="134.5" width="6" height="2.5" fill="#444"/><rect x="256" y="139" width="6" height="2.5" fill="#444"/>
<text x="268.0" y="142.8" font-family="Liberation Sans" font-size="9" font-weight="normal" font-style="normal" fill="#555" textLength="46.0" lengthAdjust="spacingAndGlyphs">1296 * 765</text>
<svg x="211" y="148" width="1143" height="550" viewBox="211 148 1143 550" overflow="hidden">
<path d="M521.5,297.8 C543,291 552,303 556,317 M566,338 C572,352 576,368 585,368.5" fill="none" stroke="#3a3828" stroke-width="1.2"/>
<path d="M530.8,288 L521.5,297.8 L534.9,300.3" fill="none" stroke="#3a3828" stroke-width="1.2"/>
<path d="M585,368.5 L595.5,361.5 L604.5,365 L596,372 Z" fill="#fff" stroke="#3a3828" stroke-width="1.2"/>

<path d="M893.8,394.8 C905,392 910,375 912,360 M918,346 C925,325 935,317 948.2,316" fill="none" stroke="#3a3828" stroke-width="1.2"/>
<path d="M936.8,309.4 L948.2,316 L935.9,322.1" fill="none" stroke="#3a3828" stroke-width="1.2"/>
<path d="M875.2,398.6 L883.7,391.5 L893.8,394.8 L885.2,401.8 Z" fill="#fff" stroke="#3a3828" stroke-width="1.2"/>

<path d="M407.2,476 L410,440 M413,417 L415.3,395" fill="none" stroke="#3a3828" stroke-width="1.2" stroke-dasharray="4,3"/>
<path d="M415.3,383.8 L407.7,394.9 L421.7,395.8 Z" fill="#3a3828" stroke="#3a3828" stroke-width="1"/>

<path d="M625,641 C622,600 600,560 575,540 L562.6,526.6 M544.2,505 C515,470 490,430 490.1,384.5" fill="none" stroke="#3a3828" stroke-width="1.2" stroke-dasharray="4,3"/>
<path d="M483.2,394.2 L490.1,383.8 L495.4,395.8" fill="none" stroke="#3a3828" stroke-width="1.2"/>

<path d="M710.8,641 C708,625 710,605 717,598 M747,575 C752,560 748,548 744.3,533" fill="none" stroke="#3a3828" stroke-width="1.2" stroke-dasharray="4,3"/>
<path d="M743,521.6 L737.6,535.7 L751.2,530 Z" fill="#3a3828" stroke="#3a3828" stroke-width="1"/>

<path d="M820.7,641 C822,600 840,560 891.5,520 M915,497 C950,465 980,430 990.2,385" fill="none" stroke="#3a3828" stroke-width="1.2" stroke-dasharray="4,3"/>
<path d="M984,396 L990.2,384.1 L996,396" fill="none" stroke="#3a3828" stroke-width="1.2"/>

<path d="M407.7,605.4 C412,628 425,640 444.6,646 M508.4,651.5 C535,652 555,657 566.8,664" fill="none" stroke="#3a3828" stroke-width="1.2"/>
<path d="M403.1,617.7 L407.7,605.4 L416.4,615.8" fill="none" stroke="#3a3828" stroke-width="1.2"/>
<path d="M566.8,664 L578.3,664.2 L583.5,673.8 L573,673.5 Z" fill="#fff" stroke="#3a3828" stroke-width="1.2"/>

<path d="M881.4,698 C888,680 894,660 896.6,651.5 M902,629 C912,595 925,570 950,565.6" fill="none" stroke="#3a3828" stroke-width="1.2"/>
<path d="M938.8,559.5 L950,565.6 L938.4,572.5" fill="none" stroke="#3a3828" stroke-width="1.2"/>

<path d="M1054,494 L1053,448 M1053,426 L1052,396" fill="none" stroke="#3a3828" stroke-width="1.2" stroke-dasharray="4,3"/>
<path d="M1052,384 L1045.5,396 L1058.5,396 Z" fill="#3a3828" stroke="#3a3828" stroke-width="1"/>

<path d="M1174.6,333.4 C1186,331 1190,322 1195.3,311 M1220.6,291.5 C1235,292 1243,298 1250.6,303" fill="none" stroke="#3a3828" stroke-width="1.2"/>
<path d="M1244.8,291.5 L1250.6,303 L1236.8,300.7" fill="none" stroke="#3a3828" stroke-width="1.2"/>
<path d="M1155.7,333.4 L1164.9,328.4 L1174.6,333.4 L1165.3,339 Z" fill="#3a3828" stroke="#3a3828" stroke-width="1"/>

<path d="M1127.6,494 C1128,470 1140,445 1183,419 M1222,397 C1262,375 1272,355 1274.8,324.5" fill="none" stroke="#3a3828" stroke-width="1.2" stroke-dasharray="4,3"/>
<path d="M1268.5,335.3 L1274.8,323.8 L1281.7,334.6" fill="none" stroke="#3a3828" stroke-width="1.2"/>

<path d="M1323.1,439 C1316,420 1317,410 1318.5,399.8 M1327.7,372 C1331,355 1331,345 1331.2,336" fill="none" stroke="#3a3828" stroke-width="1.2" stroke-dasharray="4,3"/>
<path d="M1331.2,324.2 L1325,336.4 L1338.6,335.3 Z" fill="#3a3828" stroke="#3a3828" stroke-width="1"/>

<path d="M1174,557 C1182,552 1188,540 1192,529 M1203.6,506 C1212,495 1222,489 1237,488.7" fill="none" stroke="#3a3828" stroke-width="1.2"/>
<path d="M1226.2,481.8 L1237,488.7 L1225.5,494.5" fill="none" stroke="#3a3828" stroke-width="1.2"/>
<path d="M1158,563.5 L1165,555.5 L1174,557 L1167,565 Z" fill="#3a3828" stroke="#3a3828" stroke-width="1"/>

<rect x="333.5" y="250.5" width="187" height="131" rx="5" fill="#faf8e2" stroke="#2b2a1e" stroke-width="1"/>
<path d="M333.5,280.5 V255.5 a5,5 0 0 1 5,-5 H515.5 a5,5 0 0 1 5,5 V280.5 Z" fill="#e3e0da" stroke="#2b2a1e" stroke-width="1"/>
<text x="404.3" y="270.2" font-family="Liberation Sans" font-size="14.5" font-weight="bold" font-style="normal" fill="#111" textLength="46.3" lengthAdjust="spacingAndGlyphs">Engine</text>
<text x="504" y="271" font-family="Liberation Serif" font-size="14" fill="#222" text-anchor="middle">I</text>
<rect x="334" y="313" width="186" height="1" fill="#c9c8bd"/>
<text x="337.5" y="302.6" font-family="Liberation Sans" font-size="14" font-weight="normal" font-style="normal" fill="#1a1a1a">+</text>
<circle cx="353.5" cy="297.7" r="2.1" fill="#3d8ef5"/>
<text x="359.6" y="303.0" font-family="Liberation Sans" font-size="15.6" font-weight="normal" font-style="normal" fill="#222" textLength="73.1" lengthAdjust="spacingAndGlyphs">type: string</text>
<text x="337.5" y="335.1" font-family="Liberation Sans" font-size="14" font-weight="normal" font-style="normal" fill="#1a1a1a">+</text>
<circle cx="353" cy="330.2" r="2.1" fill="#3d8ef5"/>
<text x="358.5" y="335.5" font-family="Liberation Sans" font-size="15.6" font-weight="normal" font-style="normal" fill="#222" textLength="134.2" lengthAdjust="spacingAndGlyphs">run (param: ...) : void</text>
<text x="337.5" y="369.1" font-family="Liberation Sans" font-size="14" font-weight="normal" font-style="normal" fill="#1a1a1a">+</text>
<circle cx="353" cy="364.2" r="2.1" fill="#3d8ef5"/>
<text x="358.5" y="369.5" font-family="Liberation Sans" font-size="15.6" font-weight="normal" font-style="normal" fill="#222" textLength="78.3" lengthAdjust="spacingAndGlyphs">stop () : void</text>
<rect x="605.5" y="321.5" width="268" height="199" rx="5" fill="#faf8e2" stroke="#2b2a1e" stroke-width="1"/>
<path d="M605.5,351.5 V326.5 a5,5 0 0 1 5,-5 H868.5 a5,5 0 0 1 5,5 V351.5 Z" fill="#e3e0da" stroke="#2b2a1e" stroke-width="1"/>
<text x="728.6" y="341.2" font-family="Liberation Sans" font-size="14.5" font-weight="bold" font-style="normal" fill="#111" textLength="23.4" lengthAdjust="spacingAndGlyphs">Car</text>
<text x="859" y="342" font-family="Liberation Serif" font-size="14" fill="#222" text-anchor="middle">I</text>
<rect x="606" y="417" width="267" height="1" fill="#c9c8bd"/>
<text x="609.5" y="373.1" font-family="Liberation Sans" font-size="14" font-weight="normal" font-style="normal" fill="#1a1a1a">+</text>
<circle cx="626" cy="368.2" r="2.1" fill="#3d8ef5"/>
<text x="631.0" y="373.5" font-family="Liberation Sans" font-size="15.6" font-weight="normal" font-style="normal" fill="#222" textLength="98.3" lengthAdjust="spacingAndGlyphs">engine: Engine</text>
<text x="609.5" y="407.1" font-family="Liberation Sans" font-size="14" font-weight="normal" font-style="normal" fill="#1a1a1a">+</text>
<circle cx="626" cy="402.2" r="2.1" fill="#3d8ef5"/>
<text x="631.0" y="407.5" font-family="Liberation Sans" font-size="15.6" font-weight="normal" font-style="normal" fill="#222" textLength="60.2" lengthAdjust="spacingAndGlyphs">tyre: Tyre</text>
<text x="609.5" y="440.1" font-family="Liberation Sans" font-size="14" font-weight="normal" font-style="normal" fill="#1a1a1a">+</text>
<circle cx="626" cy="435.2" r="2.1" fill="#3d8ef5"/>
<text x="630.0" y="440.5" font-family="Liberation Sans" font-size="15.6" font-weight="normal" font-style="normal" fill="#222" textLength="71.6" lengthAdjust="spacingAndGlyphs">run () : void</text>
<text x="609.5" y="474.1" font-family="Liberation Sans" font-size="14" font-weight="normal" font-style="normal" fill="#1a1a1a">+</text>
<circle cx="626" cy="469.2" r="2.1" fill="#3d8ef5"/>
<text x="630.0" y="474.5" font-family="Liberation Sans" font-size="15.6" font-weight="normal" font-style="normal" fill="#222" textLength="78.5" lengthAdjust="spacingAndGlyphs">stop () : void</text>
<text x="609.5" y="507.1" font-family="Liberation Sans" font-size="14" font-weight="normal" font-style="normal" fill="#1a1a1a">+</text>
<circle cx="626" cy="502.2" r="2.1" fill="#3d8ef5"/>
<text x="630.0" y="507.5" font-family="Liberation Sans" font-size="15.6" font-weight="normal" font-style="normal" fill="#222" textLength="212.4" lengthAdjust="spacingAndGlyphs">playMusic (musicName:...) : void</text>
<rect x="949.5" y="250.5" width="205" height="131" rx="5" fill="#faf8e2" stroke="#2b2a1e" stroke-width="1"/>
<path d="M949.5,280.5 V255.5 a5,5 0 0 1 5,-5 H1149.5 a5,5 0 0 1 5,5 V280.5 Z" fill="#e3e0da" stroke="#2b2a1e" stroke-width="1"/>
<text x="1037.5" y="270.2" font-family="Liberation Sans" font-size="14.5" font-weight="bold" font-style="normal" fill="#111" textLength="29.2" lengthAdjust="spacingAndGlyphs">Tyre</text>
<text x="1139" y="271" font-family="Liberation Serif" font-size="14" fill="#222" text-anchor="middle">I</text>
<rect x="950" y="346" width="204" height="1" fill="#c9c8bd"/>
<text x="953.0" y="302.6" font-family="Liberation Sans" font-size="14" font-weight="normal" font-style="normal" fill="#1a1a1a">+</text>
<circle cx="969" cy="297.7" r="2.1" fill="#3d8ef5"/>
<text x="975.0" y="303.0" font-family="Liberation Sans" font-size="15.6" font-weight="normal" font-style="normal" fill="#222" textLength="74.0" lengthAdjust="spacingAndGlyphs">type: string</text>
<text x="953.0" y="335.1" font-family="Liberation Sans" font-size="14" font-weight="normal" font-style="normal" fill="#1a1a1a">+</text>
<circle cx="969" cy="330.2" r="2.1" fill="#3d8ef5"/>
<text x="975.0" y="335.5" font-family="Liberation Sans" font-size="15.6" font-weight="normal" font-style="normal" fill="#222" textLength="101.0" lengthAdjust="spacingAndGlyphs">rubber: Rubber</text>
<text x="953.0" y="369.1" font-family="Liberation Sans" font-size="14" font-weight="normal" font-style="normal" fill="#1a1a1a">+</text>
<circle cx="969" cy="364.2" r="2.1" fill="#3d8ef5"/>
<text x="973.8" y="369.5" font-family="Liberation Sans" font-size="15.6" font-weight="normal" font-style="normal" fill="#222" textLength="159.2" lengthAdjust="spacingAndGlyphs">rotate (gasoline... ) : void</text>
<rect x="1251.5" y="250.5" width="147" height="71" rx="5" fill="#faf8e2" stroke="#2b2a1e" stroke-width="1"/>
<path d="M1251.5,280.5 V255.5 a5,5 0 0 1 5,-5 H1393.5 a5,5 0 0 1 5,5 V280.5 Z" fill="#e3e0da" stroke="#2b2a1e" stroke-width="1"/>
<text x="1275.0" y="270.2" font-family="Liberation Sans" font-size="14.5" font-weight="bold" font-style="normal" fill="#111" textLength="100.0" lengthAdjust="spacingAndGlyphs">CommonRubber</text>
<text x="1384" y="271" font-family="Liberation Serif" font-size="14" fill="#222" text-anchor="middle">I</text>
<text x="1256.0" y="307.1" font-family="Liberation Sans" font-size="14" font-weight="normal" font-style="normal" fill="#1a1a1a">+</text>
<circle cx="1272" cy="302.2" r="2.1" fill="#3d8ef5"/>
<text x="1277.3" y="307.5" font-family="Liberation Sans" font-size="15.6" font-weight="normal" font-style="normal" fill="#222" textLength="74.0" lengthAdjust="spacingAndGlyphs">type: string</text>
<rect x="313.5" y="476.5" width="187" height="128" rx="5" fill="#faf8e2" stroke="#2b2a1e" stroke-width="1"/>
<path d="M313.5,506.5 V481.5 a5,5 0 0 1 5,-5 H495.5 a5,5 0 0 1 5,5 V506.5 Z" fill="#e3e0da" stroke="#2b2a1e" stroke-width="1"/>
<text x="353.3" y="496.2" font-family="Liberation Sans" font-size="14.5" font-weight="bold" font-style="normal" fill="#111" textLength="107.7" lengthAdjust="spacingAndGlyphs">GasolineEngine</text>
<text x="485" y="497" font-family="Liberation Sans" font-style="italic" font-size="15" fill="#333" text-anchor="middle">C</text>
<rect x="314" y="537" width="186" height="1" fill="#c9c8bd"/>
<text x="316.5" y="527.1" font-family="Liberation Sans" font-size="14" font-weight="normal" font-style="normal" fill="#1a1a1a">+</text>
<circle cx="333" cy="522.2" r="2.1" fill="#3d8ef5"/>
<text x="338.7" y="527.5" font-family="Liberation Sans" font-size="15.6" font-weight="normal" font-style="normal" fill="#222" textLength="75.0" lengthAdjust="spacingAndGlyphs">type: string</text>
<text x="316.5" y="559.1" font-family="Liberation Sans" font-size="14" font-weight="normal" font-style="normal" fill="#1a1a1a">+</text>
<circle cx="333" cy="554.2" r="2.1" fill="#3d8ef5"/>
<text x="338.3" y="559.5" font-family="Liberation Sans" font-size="15.6" font-weight="normal" font-style="normal" fill="#222" textLength="134.8" lengthAdjust="spacingAndGlyphs">run (gasolin... ) : void</text>
<text x="316.5" y="591.6" font-family="Liberation Sans" font-size="14" font-weight="normal" font-style="normal" fill="#1a1a1a">+</text>
<circle cx="333" cy="586.7" r="2.1" fill="#3d8ef5"/>
<text x="338.3" y="592.0" font-family="Liberation Sans" font-size="15.6" font-weight="normal" font-style="normal" fill="#222" textLength="78.8" lengthAdjust="spacingAndGlyphs">stop () : void</text>
<rect x="584.5" y="641.5" width="253" height="174" rx="5" fill="#faf8e2" stroke="#2b2a1e" stroke-width="1"/>
<path d="M584.5,671.5 V646.5 a5,5 0 0 1 5,-5 H832.5 a5,5 0 0 1 5,5 V671.5 Z" fill="#e3e0da" stroke="#2b2a1e" stroke-width="1"/>
<text x="669.6" y="661.2" font-family="Liberation Sans" font-size="14.5" font-weight="bold" font-style="normal" fill="#111" textLength="83.4" lengthAdjust="spacingAndGlyphs">GasolineCar</text>
<text x="822" y="662" font-family="Liberation Sans" font-style="italic" font-size="15" fill="#333" text-anchor="middle">C</text>
<rect x="585" y="728" width="252" height="1" fill="#c9c8bd"/>
<text x="588.5" y="689.6" font-family="Liberation Sans" font-size="14" font-weight="normal" font-style="normal" fill="#1a1a1a">+</text>
<circle cx="605" cy="684.7" r="2.1" fill="#3d8ef5"/>
<text x="610.1" y="690.0" font-family="Liberation Sans" font-size="15.6" font-weight="normal" font-style="normal" fill="#222" textLength="97.9" lengthAdjust="spacingAndGlyphs">engine: Engine</text>
<text x="588.5" y="717.6" font-family="Liberation Sans" font-size="14" font-weight="normal" font-style="normal" fill="#1a1a1a">+</text>
<circle cx="605" cy="712.7" r="2.1" fill="#3d8ef5"/>
<text x="610.1" y="718.0" font-family="Liberation Sans" font-size="15.6" font-weight="normal" font-style="normal" fill="#222" textLength="59.9" lengthAdjust="spacingAndGlyphs">tyre: Tyre</text>
<text x="588.5" y="749.6" font-family="Liberation Sans" font-size="14" font-weight="normal" font-style="normal" fill="#1a1a1a">+</text>
<circle cx="605" cy="744.7" r="2.1" fill="#3d8ef5"/>
<text x="610.1" y="750.0" font-family="Liberation Sans" font-size="15.6" font-weight="normal" font-style="normal" fill="#222" textLength="70.9" lengthAdjust="spacingAndGlyphs">run () : void</text>
<text x="588.5" y="775.6" font-family="Liberation Sans" font-size="14" font-weight="normal" font-style="normal" fill="#1a1a1a">+</text>
<circle cx="605" cy="770.7" r="2.1" fill="#3d8ef5"/>
<text x="610.1" y="776.0" font-family="Liberation Sans" font-size="15.6" font-weight="normal" font-style="normal" fill="#222" textLength="77.9" lengthAdjust="spacingAndGlyphs">stop () : void</text>
<text x="588.5" y="801.6" font-family="Liberation Sans" font-size="14" font-weight="normal" font-style="normal" fill="#1a1a1a">+</text>
<circle cx="605" cy="796.7" r="2.1" fill="#3d8ef5"/>
<text x="610.1" y="802.0" font-family="Liberation Sans" font-size="15.6" font-weight="normal" font-style="normal" fill="#222" textLength="209.9" lengthAdjust="spacingAndGlyphs">playMusic (musicName:...) : void</text>
<rect x="951.5" y="494.5" width="205" height="140" rx="5" fill="#faf8e2" stroke="#2b2a1e" stroke-width="1"/>
<path d="M951.5,524.5 V499.5 a5,5 0 0 1 5,-5 H1151.5 a5,5 0 0 1 5,5 V524.5 Z" fill="#e3e0da" stroke="#2b2a1e" stroke-width="1"/>
<text x="981.3" y="513.2" font-family="Liberation Sans" font-size="14.5" font-weight="bold" font-style="normal" fill="#111" textLength="145.7" lengthAdjust="spacingAndGlyphs">CommonRubberTyre</text>
<text x="1141" y="514" font-family="Liberation Sans" font-style="italic" font-size="15" fill="#333" text-anchor="middle">C</text>
<rect x="952" y="597" width="204" height="1" fill="#c9c8bd"/>
<text x="955.0" y="547.1" font-family="Liberation Sans" font-size="14" font-weight="normal" font-style="normal" fill="#1a1a1a">+</text>
<circle cx="971" cy="542.2" r="2.1" fill="#3d8ef5"/>
<text x="976.8" y="547.5" font-family="Liberation Sans" font-size="15.6" font-weight="normal" font-style="normal" fill="#222" textLength="74.6" lengthAdjust="spacingAndGlyphs">type: string</text>
<text x="955.0" y="584.1" font-family="Liberation Sans" font-size="14" font-weight="normal" font-style="normal" fill="#1a1a1a">+</text>
<circle cx="971" cy="579.2" r="2.1" fill="#3d8ef5"/>
<text x="976.8" y="584.5" font-family="Liberation Sans" font-size="15.6" font-weight="normal" font-style="normal" fill="#222" textLength="101.6" lengthAdjust="spacingAndGlyphs">rubber: Rubber</text>
<text x="955.0" y="620.1" font-family="Liberation Sans" font-size="14" font-weight="normal" font-style="normal" fill="#1a1a1a">+</text>
<circle cx="971" cy="615.2" r="2.1" fill="#3d8ef5"/>
<text x="975.8" y="620.5" font-family="Liberation Sans" font-size="15.6" font-weight="normal" font-style="normal" fill="#222" textLength="160.2" lengthAdjust="spacingAndGlyphs">rotate (gasoline... ) : void</text>
<rect x="1238.5" y="440.5" width="173" height="68" rx="5" fill="#faf8e2" stroke="#2b2a1e" stroke-width="1"/>
<path d="M1238.5,470.5 V445.5 a5,5 0 0 1 5,-5 H1406.5 a5,5 0 0 1 5,5 V470.5 Z" fill="#e3e0da" stroke="#2b2a1e" stroke-width="1"/>
<text x="1267.5" y="460.2" font-family="Liberation Sans" font-size="14.5" font-weight="bold" font-style="normal" fill="#111" textLength="110.0" lengthAdjust="spacingAndGlyphs">CommonRubber</text>
<text x="1395" y="461" font-family="Liberation Sans" font-style="italic" font-size="15" fill="#333" text-anchor="middle">C</text>
<text x="1242.0" y="494.1" font-family="Liberation Sans" font-size="14" font-weight="normal" font-style="normal" fill="#1a1a1a">+</text>
<circle cx="1259" cy="489.2" r="2.1" fill="#3d8ef5"/>
<text x="1264.3" y="494.5" font-family="Liberation Sans" font-size="15.6" font-weight="normal" font-style="normal" fill="#222" textLength="74.2" lengthAdjust="spacingAndGlyphs">type: string</text>
<rect x="530" y="319" width="68" height="19" fill="#fff"/><text x="533.0" y="332.5" font-family="Liberation Sans" font-size="14.3" font-weight="normal" font-style="normal" fill="#333" textLength="62.0" lengthAdjust="spacingAndGlyphs">aggregate</text>
<rect x="880" y="346" width="66" height="15" fill="#fff"/><text x="881.8" y="356.5" font-family="Liberation Sans" font-size="14.3" font-weight="normal" font-style="normal" fill="#333" textLength="61.7" lengthAdjust="spacingAndGlyphs">aggregate</text>
<rect x="374" y="417" width="75" height="22" fill="#fff"/><text x="376.0" y="432.5" font-family="Liberation Sans" font-size="14.3" font-weight="normal" font-style="normal" fill="#333" textLength="71.0" lengthAdjust="spacingAndGlyphs">implements</text>
<rect x="517" y="507" width="78" height="20" fill="#fff"/><text x="518.4" y="520.5" font-family="Liberation Sans" font-size="14.3" font-weight="normal" font-style="normal" fill="#333" textLength="74.6" lengthAdjust="spacingAndGlyphs">dependency</text>
<rect x="693" y="576" width="74" height="22" fill="#fff"/><text x="694.6" y="591.5" font-family="Liberation Sans" font-size="14.3" font-weight="normal" font-style="normal" fill="#333" textLength="71.3" lengthAdjust="spacingAndGlyphs">implements</text>
<rect x="864" y="498" width="77" height="22" fill="#fff"/><text x="864.6" y="512.5" font-family="Liberation Sans" font-size="14.3" font-weight="normal" font-style="normal" fill="#333" textLength="75.4" lengthAdjust="spacingAndGlyphs">dependency</text>
<rect x="445" y="640" width="63" height="21.5" fill="#fff"/><text x="445.6" y="656.0" font-family="Liberation Sans" font-size="14.3" font-weight="normal" font-style="normal" fill="#333" textLength="62.0" lengthAdjust="spacingAndGlyphs">aggregate</text>
<rect x="864" y="630" width="65" height="21.5" fill="#fff"/><text x="865.6" y="645.5" font-family="Liberation Sans" font-size="14.3" font-weight="normal" font-style="normal" fill="#333" textLength="62.4" lengthAdjust="spacingAndGlyphs">aggregate</text>
<rect x="1015" y="426" width="76" height="22" fill="#fff"/><text x="1017.0" y="441.5" font-family="Liberation Sans" font-size="14.3" font-weight="normal" font-style="normal" fill="#333" textLength="72.0" lengthAdjust="spacingAndGlyphs">implements</text>
<rect x="1172" y="298" width="58" height="13" fill="#fff"/><text x="1173.4" y="308.5" font-family="Liberation Sans" font-size="14.3" font-weight="normal" font-style="normal" fill="#333" textLength="55.3" lengthAdjust="spacingAndGlyphs">compose</text>
<rect x="1163" y="397" width="76" height="21" fill="#fff"/><text x="1163.7" y="412.5" font-family="Liberation Sans" font-size="14.3" font-weight="normal" font-style="normal" fill="#333" textLength="74.7" lengthAdjust="spacingAndGlyphs">dependency</text>
<rect x="1284" y="374" width="76" height="23" fill="#fff"/><text x="1286.0" y="389.5" font-family="Liberation Sans" font-size="14.3" font-weight="normal" font-style="normal" fill="#333" textLength="72.0" lengthAdjust="spacingAndGlyphs">implements</text>
<rect x="1166" y="508" width="57" height="21" fill="#fff"/><text x="1166.8" y="522.5" font-family="Liberation Sans" font-size="14.3" font-weight="normal" font-style="normal" fill="#333" textLength="55.2" lengthAdjust="spacingAndGlyphs">compose</text>
</svg>
<rect x="1181" y="148" width="170.5" height="138" rx="4" fill="#e9e7ea"/>
<rect x="1181" y="148" width="170.5" height="104" fill="#a9a9a9"/>
<rect x="1185.5" y="153" width="161" height="94" fill="#ffffff"/>
<rect x="1184.7" y="257.3" width="162.6" height="23.7" rx="11.8" fill="#1b8cf8"/>
<circle cx="1205.5" cy="269" r="4.5" fill="none" stroke="#fff" stroke-width="1.2" transform="scale(1.15,0.8) translate(-157.2,67)"/>
<path d="M1199,269 Q1205,262 1212,269 Q1205,276 1199,269 Z M1200,275 L1211,263" fill="none" stroke="#fff" stroke-width="1.2"/>
<text x="1217.0" y="274.0" font-family="Liberation Sans" font-size="13.5" font-weight="normal" font-style="normal" fill="#ffffff" textLength="116.5" lengthAdjust="spacingAndGlyphs">Turn off navigation</text>
<svg x="1186" y="153" width="160.3" height="94.3" viewBox="1186 153 160.3 94.3" overflow="hidden">
<g transform="translate(1159.5,134.1) scale(0.1245)">
<rect x="0" y="0" width="1400" height="900" fill="none"/>
<rect x="213" y="0" width="2" height="1000" fill="#f3f3f3"/><rect x="223" y="0" width="2" height="1000" fill="#f3f3f3"/><rect x="233" y="0" width="2" height="1000" fill="#f3f3f3"/><rect x="243" y="0" width="2" height="1000" fill="#f3f3f3"/><rect x="253" y="0" width="2" height="1000" fill="#f3f3f3"/><rect x="263" y="0" width="2" height="1000" fill="#f3f3f3"/><rect x="273" y="0" width="2" height="1000" fill="#f3f3f3"/><rect x="283" y="0" width="2" height="1000" fill="#f3f3f3"/><rect x="293" y="0" width="2" height="1000" fill="#f3f3f3"/><rect x="303" y="0" width="2" height="1000" fill="#f3f3f3"/><rect x="313" y="0" width="2" height="1000" fill="#f3f3f3"/><rect x="323" y="0" width="2" height="1000" fill="#f3f3f3"/><rect x="333" y="0" width="2" height="1000" fill="#f3f3f3"/><rect x="343" y="0" width="2" height="1000" fill="#f3f3f3"/><rect x="353" y="0" width="2" height="1000" fill="#f3f3f3"/><rect x="363" y="0" width="2" height="1000" fill="#f3f3f3"/><rect x="373" y="0" width="2" height="1000" fill="#f3f3f3"/><rect x="383" y="0" width="2" height="1000" fill="#f3f3f3"/><rect x="393" y="0" width="2" height="1000" fill="#f3f3f3"/><rect x="403" y="0" width="2" height="1000" fill="#f3f3f3"/><rect x="413" y="0" width="2" height="1000" fill="#f3f3f3"/><rect x="423" y="0" width="2" height="1000" fill="#f3f3f3"/><rect x="433" y="0" width="2" height="1000" fill="#f3f3f3"/><rect x="443" y="0" width="2" height="1000" fill="#f3f3f3"/><rect x="453" y="0" width="2" height="1000" fill="#f3f3f3"/><rect x="463" y="0" width="2" height="1000" fill="#f3f3f3"/><rect x="473" y="0" width="2" height="1000" fill="#f3f3f3"/><rect x="483" y="0" width="2" height="1000" fill="#f3f3f3"/><rect x="493" y="0" width="2" height="1000" fill="#f3f3f3"/><rect x="503" y="0" width="2" height="1000" fill="#f3f3f3"/><rect x="513" y="0" width="2" height="1000" fill="#f3f3f3"/><rect x="523" y="0" width="2" height="1000" fill="#f3f3f3"/><rect x="533" y="0" width="2" height="1000" fill="#f3f3f3"/><rect x="543" y="0" width="2" height="1000" fill="#f3f3f3"/><rect x="553" y="0" width="2" height="1000" fill="#f3f3f3"/><rect x="563" y="0" width="2" height="1000" fill="#f3f3f3"/><rect x="573" y="0" width="2" height="1000" fill="#f3f3f3"/><rect x="583" y="0" width="2" height="1000" fill="#f3f3f3"/><rect x="593" y="0" width="2" height="1000" fill="#f3f3f3"/><rect x="603" y="0" width="2" height="1000" fill="#f3f3f3"/><rect x="613" y="0" width="2" height="1000" fill="#f3f3f3"/><rect x="623" y="0" width="2" height="1000" fill="#f3f3f3"/><rect x="633" y="0" width="2" height="1000" fill="#f3f3f3"/><rect x="643" y="0" width="2" height="1000" fill="#f3f3f3"/><rect x="653" y="0" width="2" height="1000" fill="#f3f3f3"/><rect x="663" y="0" width="2" height="1000" fill="#f3f3f3"/><rect x="673" y="0" width="2" height="1000" fill="#f3f3f3"/><rect x="683" y="0" width="2" height="1000" fill="#f3f3f3"/><rect x="693" y="0" width="2" height="1000" fill="#f3f3f3"/><rect x="703" y="0" width="2" height="1000" fill="#f3f3f3"/><rect x="713" y="0" width="2" height="1000" fill="#f3f3f3"/><rect x="723" y="0" width="2" height="1000" fill="#f3f3f3"/><rect x="733" y="0" width="2" height="1000" fill="#f3f3f3"/><rect x="743" y="0" width="2" height="1000" fill="#f3f3f3"/><rect x="753" y="0" width="2" height="1000" fill="#f3f3f3"/><rect x="763" y="0" width="2" height="1000" fill="#f3f3f3"/><rect x="773" y="0" width="2" height="1000" fill="#f3f3f3"/><rect x="783" y="0" width="2" height="1000" fill="#f3f3f3"/><rect x="793" y="0" width="2" height="1000" fill="#f3f3f3"/><rect x="803" y="0" width="2" height="1000" fill="#f3f3f3"/><rect x="813" y="0" width="2" height="1000" fill="#f3f3f3"/><rect x="823" y="0" width="2" height="1000" fill="#f3f3f3"/><rect x="833" y="0" width="2" height="1000" fill="#f3f3f3"/><rect x="843" y="0" width="2" height="1000" fill="#f3f3f3"/><rect x="853" y="0" width="2" height="1000" fill="#f3f3f3"/><rect x="863" y="0" width="2" height="1000" fill="#f3f3f3"/><rect x="873" y="0" width="2" height="1000" fill="#f3f3f3"/><rect x="883" y="0" width="2" height="1000" fill="#f3f3f3"/><rect x="893" y="0" width="2" height="1000" fill="#f3f3f3"/><rect x="903" y="0" width="2" height="1000" fill="#f3f3f3"/><rect x="913" y="0" width="2" height="1000" fill="#f3f3f3"/><rect x="923" y="0" width="2" height="1000" fill="#f3f3f3"/><rect x="933" y="0" width="2" height="1000" fill="#f3f3f3"/><rect x="943" y="0" width="2" height="1000" fill="#f3f3f3"/><rect x="953" y="0" width="2" height="1000" fill="#f3f3f3"/><rect x="963" y="0" width="2" height="1000" fill="#f3f3f3"/><rect x="973" y="0" width="2" height="1000" fill="#f3f3f3"/><rect x="983" y="0" width="2" height="1000" fill="#f3f3f3"/><rect x="993" y="0" width="2" height="1000" fill="#f3f3f3"/><rect x="1003" y="0" width="2" height="1000" fill="#f3f3f3"/><rect x="1013" y="0" width="2" height="1000" fill="#f3f3f3"/><rect x="1023" y="0" width="2" height="1000" fill="#f3f3f3"/><rect x="1033" y="0" width="2" height="1000" fill="#f3f3f3"/><rect x="1043" y="0" width="2" height="1000" fill="#f3f3f3"/><rect x="1053" y="0" width="2" height="1000" fill="#f3f3f3"/><rect x="1063" y="0" width="2" height="1000" fill="#f3f3f3"/><rect x="1073" y="0" width="2" height="1000" fill="#f3f3f3"/><rect x="1083" y="0" width="2" height="1000" fill="#f3f3f3"/><rect x="1093" y="0" width="2" height="1000" fill="#f3f3f3"/><rect x="1103" y="0" width="2" height="1000" fill="#f3f3f3"/><rect x="1113" y="0" width="2" height="1000" fill="#f3f3f3"/><rect x="1123" y="0" width="2" height="1000" fill="#f3f3f3"/><rect x="1133" y="0" width="2" height="1000" fill="#f3f3f3"/><rect x="1143" y="0" width="2" height="1000" fill="#f3f3f3"/><rect x="1153" y="0" width="2" height="1000" fill="#f3f3f3"/><rect x="1163" y="0" width="2" height="1000" fill="#f3f3f3"/><rect x="1173" y="0" width="2" height="1000" fill="#f3f3f3"/><rect x="1183" y="0" width="2" height="1000" fill="#f3f3f3"/><rect x="1193" y="0" width="2" height="1000" fill="#f3f3f3"/><rect x="1203" y="0" width="2" height="1000" fill="#f3f3f3"/><rect x="1213" y="0" width="2" height="1000" fill="#f3f3f3"/><rect x="1223" y="0" width="2" height="1000" fill="#f3f3f3"/><rect x="1233" y="0" width="2" height="1000" fill="#f3f3f3"/><rect x="1243" y="0" width="2" height="1000" fill="#f3f3f3"/><rect x="1253" y="0" width="2" height="1000" fill="#f3f3f3"/><rect x="1263" y="0" width="2" height="1000" fill="#f3f3f3"/><rect x="1273" y="0" width="2" height="1000" fill="#f3f3f3"/><rect x="1283" y="0" width="2" height="1000" fill="#f3f3f3"/><rect x="1293" y="0" width="2" height="1000" fill="#f3f3f3"/><rect x="1303" y="0" width="2" height="1000" fill="#f3f3f3"/><rect x="1313" y="0" width="2" height="1000" fill="#f3f3f3"/><rect x="1323" y="0" width="2" height="1000" fill="#f3f3f3"/><rect x="1333" y="0" width="2" height="1000" fill="#f3f3f3"/><rect x="1343" y="0" width="2" height="1000" fill="#f3f3f3"/><rect x="1353" y="0" width="2" height="1000" fill="#f3f3f3"/><rect x="1363" y="0" width="2" height="1000" fill="#f3f3f3"/><rect x="1373" y="0" width="2" height="1000" fill="#f3f3f3"/><rect x="1383" y="0" width="2" height="1000" fill="#f3f3f3"/><rect x="1393" y="0" width="2" height="1000" fill="#f3f3f3"/><rect x="1403" y="0" width="2" height="1000" fill="#f3f3f3"/><rect x="1413" y="0" width="2" height="1000" fill="#f3f3f3"/><rect x="1423" y="0" width="2" height="1000" fill="#f3f3f3"/><rect x="1433" y="0" width="2" height="1000" fill="#f3f3f3"/><rect x="1443" y="0" width="2" height="1000" fill="#f3f3f3"/><rect x="1453" y="0" width="2" height="1000" fill="#f3f3f3"/><rect x="1463" y="0" width="2" height="1000" fill="#f3f3f3"/><rect x="1473" y="0" width="2" height="1000" fill="#f3f3f3"/><rect x="1483" y="0" width="2" height="1000" fill="#f3f3f3"/><rect x="1493" y="0" width="2" height="1000" fill="#f3f3f3"/><rect x="1503" y="0" width="2" height="1000" fill="#f3f3f3"/><rect x="1513" y="0" width="2" height="1000" fill="#f3f3f3"/><rect x="1523" y="0" width="2" height="1000" fill="#f3f3f3"/><rect x="1533" y="0" width="2" height="1000" fill="#f3f3f3"/><rect x="1543" y="0" width="2" height="1000" fill="#f3f3f3"/><rect x="1553" y="0" width="2" height="1000" fill="#f3f3f3"/><rect x="1563" y="0" width="2" height="1000" fill="#f3f3f3"/><rect x="1573" y="0" width="2" height="1000" fill="#f3f3f3"/><rect x="1583" y="0" width="2" height="1000" fill="#f3f3f3"/><rect x="1593" y="0" width="2" height="1000" fill="#f3f3f3"/><rect x="1603" y="0" width="2" height="1000" fill="#f3f3f3"/><rect x="1613" y="0" width="2" height="1000" fill="#f3f3f3"/><rect x="1623" y="0" width="2" height="1000" fill="#f3f3f3"/><rect x="1633" y="0" width="2" height="1000" fill="#f3f3f3"/><rect x="1643" y="0" width="2" height="1000" fill="#f3f3f3"/><rect x="1653" y="0" width="2" height="1000" fill="#f3f3f3"/><rect x="1663" y="0" width="2" height="1000" fill="#f3f3f3"/><rect x="1673" y="0" width="2" height="1000" fill="#f3f3f3"/><rect x="1683" y="0" width="2" height="1000" fill="#f3f3f3"/><rect x="1693" y="0" width="2" height="1000" fill="#f3f3f3"/><rect x="0" y="150" width="1700" height="2" fill="#f3f3f3"/><rect x="0" y="160" width="1700" height="2" fill="#f3f3f3"/><rect x="0" y="170" width="1700" height="2" fill="#f3f3f3"/><rect x="0" y="180" width="1700" height="2" fill="#f3f3f3"/><rect x="0" y="190" width="1700" height="2" fill="#f3f3f3"/><rect x="0" y="200" width="1700" height="2" fill="#f3f3f3"/><rect x="0" y="210" width="1700" height="2" fill="#f3f3f3"/><rect x="0" y="220" width="1700" height="2" fill="#f3f3f3"/><rect x="0" y="230" width="1700" height="2" fill="#f3f3f3"/><rect x="0" y="240" width="1700" height="2" fill="#f3f3f3"/><rect x="0" y="250" width="1700" height="2" fill="#f3f3f3"/><rect x="0" y="260" width="1700" height="2" fill="#f3f3f3"/><rect x="0" y="270" width="1700" height="2" fill="#f3f3f3"/><rect x="0" y="280" width="1700" height="2" fill="#f3f3f3"/><rect x="0" y="290" width="1700" height="2" fill="#f3f3f3"/><rect x="0" y="300" width="1700" height="2" fill="#f3f3f3"/><rect x="0" y="310" width="1700" height="2" fill="#f3f3f3"/><rect x="0" y="320" width="1700" height="2" fill="#f3f3f3"/><rect x="0" y="330" width="1700" height="2" fill="#f3f3f3"/><rect x="0" y="340" width="1700" height="2" fill="#f3f3f3"/><rect x="0" y="350" width="1700" height="2" fill="#f3f3f3"/><rect x="0" y="360" width="1700" height="2" fill="#f3f3f3"/><rect x="0" y="370" width="1700" height="2" fill="#f3f3f3"/><rect x="0" y="380" width="1700" height="2" fill="#f3f3f3"/><rect x="0" y="390" width="1700" height="2" fill="#f3f3f3"/><rect x="0" y="400" width="1700" height="2" fill="#f3f3f3"/><rect x="0" y="410" width="1700" height="2" fill="#f3f3f3"/><rect x="0" y="420" width="1700" height="2" fill="#f3f3f3"/><rect x="0" y="430" width="1700" height="2" fill="#f3f3f3"/><rect x="0" y="440" width="1700" height="2" fill="#f3f3f3"/><rect x="0" y="450" width="1700" height="2" fill="#f3f3f3"/><rect x="0" y="460" width="1700" height="2" fill="#f3f3f3"/><rect x="0" y="470" width="1700" height="2" fill="#f3f3f3"/><rect x="0" y="480" width="1700" height="2" fill="#f3f3f3"/><rect x="0" y="490" width="1700" height="2" fill="#f3f3f3"/><rect x="0" y="500" width="1700" height="2" fill="#f3f3f3"/><rect x="0" y="510" width="1700" height="2" fill="#f3f3f3"/><rect x="0" y="520" width="1700" height="2" fill="#f3f3f3"/><rect x="0" y="530" width="1700" height="2" fill="#f3f3f3"/><rect x="0" y="540" width="1700" height="2" fill="#f3f3f3"/><rect x="0" y="550" width="1700" height="2" fill="#f3f3f3"/><rect x="0" y="560" width="1700" height="2" fill="#f3f3f3"/><rect x="0" y="570" width="1700" height="2" fill="#f3f3f3"/><rect x="0" y="580" width="1700" height="2" fill="#f3f3f3"/><rect x="0" y="590" width="1700" height="2" fill="#f3f3f3"/><rect x="0" y="600" width="1700" height="2" fill="#f3f3f3"/><rect x="0" y="610" width="1700" height="2" fill="#f3f3f3"/><rect x="0" y="620" width="1700" height="2" fill="#f3f3f3"/><rect x="0" y="630" width="1700" height="2" fill="#f3f3f3"/><rect x="0" y="640" width="1700" height="2" fill="#f3f3f3"/><rect x="0" y="650" width="1700" height="2" fill="#f3f3f3"/><rect x="0" y="660" width="1700" height="2" fill="#f3f3f3"/><rect x="0" y="670" width="1700" height="2" fill="#f3f3f3"/><rect x="0" y="680" width="1700" height="2" fill="#f3f3f3"/><rect x="0" y="690" width="1700" height="2" fill="#f3f3f3"/><rect x="0" y="700" width="1700" height="2" fill="#f3f3f3"/><rect x="0" y="710" width="1700" height="2" fill="#f3f3f3"/><rect x="0" y="720" width="1700" height="2" fill="#f3f3f3"/><rect x="0" y="730" width="1700" height="2" fill="#f3f3f3"/><rect x="0" y="740" width="1700" height="2" fill="#f3f3f3"/><rect x="0" y="750" width="1700" height="2" fill="#f3f3f3"/><rect x="0" y="760" width="1700" height="2" fill="#f3f3f3"/><rect x="0" y="770" width="1700" height="2" fill="#f3f3f3"/><rect x="0" y="780" width="1700" height="2" fill="#f3f3f3"/><rect x="0" y="790" width="1700" height="2" fill="#f3f3f3"/><rect x="0" y="800" width="1700" height="2" fill="#f3f3f3"/><rect x="0" y="810" width="1700" height="2" fill="#f3f3f3"/><rect x="0" y="820" width="1700" height="2" fill="#f3f3f3"/><rect x="0" y="830" width="1700" height="2" fill="#f3f3f3"/><rect x="0" y="840" width="1700" height="2" fill="#f3f3f3"/><rect x="0" y="850" width="1700" height="2" fill="#f3f3f3"/><rect x="0" y="860" width="1700" height="2" fill="#f3f3f3"/><rect x="0" y="870" width="1700" height="2" fill="#f3f3f3"/><rect x="0" y="880" width="1700" height="2" fill="#f3f3f3"/><rect x="0" y="890" width="1700" height="2" fill="#f3f3f3"/><rect x="0" y="900" width="1700" height="2" fill="#f3f3f3"/><rect x="0" y="910" width="1700" height="2" fill="#f3f3f3"/><rect x="0" y="920" width="1700" height="2" fill="#f3f3f3"/><rect x="0" y="930" width="1700" height="2" fill="#f3f3f3"/><rect x="0" y="940" width="1700" height="2" fill="#f3f3f3"/><rect x="0" y="950" width="1700" height="2" fill="#f3f3f3"/><rect x="0" y="960" width="1700" height="2" fill="#f3f3f3"/><rect x="0" y="970" width="1700" height="2" fill="#f3f3f3"/><rect x="0" y="980" width="1700" height="2" fill="#f3f3f3"/><rect x="0" y="990" width="1700" height="2" fill="#f3f3f3"/>
<path d="M521.5,297.8 C543,291 552,303 556,317 M566,338 C572,352 576,368 585,368.5" fill="none" stroke="#3a3828" stroke-width="4"/>
<path d="M530.8,288 L521.5,297.8 L534.9,300.3" fill="none" stroke="#3a3828" stroke-width="4"/>
<path d="M585,368.5 L595.5,361.5 L604.5,365 L596,372 Z" fill="#fff" stroke="#3a3828" stroke-width="4"/>

<path d="M893.8,394.8 C905,392 910,375 912,360 M918,346 C925,325 935,317 948.2,316" fill="none" stroke="#3a3828" stroke-width="4"/>
<path d="M936.8,309.4 L948.2,316 L935.9,322.1" fill="none" stroke="#3a3828" stroke-width="4"/>
<path d="M875.2,398.6 L883.7,391.5 L893.8,394.8 L885.2,401.8 Z" fill="#fff" stroke="#3a3828" stroke-width="4"/>

<path d="M407.2,476 L410,440 M413,417 L415.3,395" fill="none" stroke="#3a3828" stroke-width="4" stroke-dasharray="4,3"/>
<path d="M415.3,383.8 L407.7,394.9 L421.7,395.8 Z" fill="#3a3828" stroke="#3a3828" stroke-width="1"/>

<path d="M625,641 C622,600 600,560 575,540 L562.6,526.6 M544.2,505 C515,470 490,430 490.1,384.5" fill="none" stroke="#3a3828" stroke-width="4" stroke-dasharray="4,3"/>
<path d="M483.2,394.2 L490.1,383.8 L495.4,395.8" fill="none" stroke="#3a3828" stroke-width="4"/>

<path d="M710.8,641 C708,625 710,605 717,598 M747,575 C752,560 748,548 744.3,533" fill="none" stroke="#3a3828" stroke-width="4" stroke-dasharray="4,3"/>
<path d="M743,521.6 L737.6,535.7 L751.2,530 Z" fill="#3a3828" stroke="#3a3828" stroke-width="1"/>

<path d="M820.7,641 C822,600 840,560 891.5,520 M915,497 C950,465 980,430 990.2,385" fill="none" stroke="#3a3828" stroke-width="4" stroke-dasharray="4,3"/>
<path d="M984,396 L990.2,384.1 L996,396" fill="none" stroke="#3a3828" stroke-width="4"/>

<path d="M407.7,605.4 C412,628 425,640 444.6,646 M508.4,651.5 C535,652 555,657 566.8,664" fill="none" stroke="#3a3828" stroke-width="4"/>
<path d="M403.1,617.7 L407.7,605.4 L416.4,615.8" fill="none" stroke="#3a3828" stroke-width="4"/>
<path d="M566.8,664 L578.3,664.2 L583.5,673.8 L573,673.5 Z" fill="#fff" stroke="#3a3828" stroke-width="4"/>

<path d="M881.4,698 C888,680 894,660 896.6,651.5 M902,629 C912,595 925,570 950,565.6" fill="none" stroke="#3a3828" stroke-width="4"/>
<path d="M938.8,559.5 L950,565.6 L938.4,572.5" fill="none" stroke="#3a3828" stroke-width="4"/>

<path d="M1054,494 L1053,448 M1053,426 L1052,396" fill="none" stroke="#3a3828" stroke-width="4" stroke-dasharray="4,3"/>
<path d="M1052,384 L1045.5,396 L1058.5,396 Z" fill="#3a3828" stroke="#3a3828" stroke-width="1"/>

<path d="M1174.6,333.4 C1186,331 1190,322 1195.3,311 M1220.6,291.5 C1235,292 1243,298 1250.6,303" fill="none" stroke="#3a3828" stroke-width="4"/>
<path d="M1244.8,291.5 L1250.6,303 L1236.8,300.7" fill="none" stroke="#3a3828" stroke-width="4"/>
<path d="M1155.7,333.4 L1164.9,328.4 L1174.6,333.4 L1165.3,339 Z" fill="#3a3828" stroke="#3a3828" stroke-width="1"/>

<path d="M1127.6,494 C1128,470 1140,445 1183,419 M1222,397 C1262,375 1272,355 1274.8,324.5" fill="none" stroke="#3a3828" stroke-width="4" stroke-dasharray="4,3"/>
<path d="M1268.5,335.3 L1274.8,323.8 L1281.7,334.6" fill="none" stroke="#3a3828" stroke-width="4"/>

<path d="M1323.1,439 C1316,420 1317,410 1318.5,399.8 M1327.7,372 C1331,355 1331,345 1331.2,336" fill="none" stroke="#3a3828" stroke-width="4" stroke-dasharray="4,3"/>
<path d="M1331.2,324.2 L1325,336.4 L1338.6,335.3 Z" fill="#3a3828" stroke="#3a3828" stroke-width="1"/>

<path d="M1174,557 C1182,552 1188,540 1192,529 M1203.6,506 C1212,495 1222,489 1237,488.7" fill="none" stroke="#3a3828" stroke-width="4"/>
<path d="M1226.2,481.8 L1237,488.7 L1225.5,494.5" fill="none" stroke="#3a3828" stroke-width="4"/>
<path d="M1158,563.5 L1165,555.5 L1174,557 L1167,565 Z" fill="#3a3828" stroke="#3a3828" stroke-width="1"/>

<rect x="333.5" y="250.5" width="187" height="131" rx="5" fill="#faf8e2" stroke="#2b2a1e" stroke-width="1"/>
<path d="M333.5,280.5 V255.5 a5,5 0 0 1 5,-5 H515.5 a5,5 0 0 1 5,5 V280.5 Z" fill="#e3e0da" stroke="#2b2a1e" stroke-width="1"/>
<text x="404.3" y="270.2" font-family="Liberation Sans" font-size="14.5" font-weight="bold" font-style="normal" fill="#111" textLength="46.3" lengthAdjust="spacingAndGlyphs">Engine</text>
<text x="504" y="271" font-family="Liberation Serif" font-size="14" fill="#222" text-anchor="middle">I</text>
<rect x="334" y="313" width="186" height="1" fill="#c9c8bd"/>
<text x="337.5" y="302.6" font-family="Liberation Sans" font-size="14" font-weight="normal" font-style="normal" fill="#1a1a1a">+</text>
<circle cx="353.5" cy="297.7" r="2.1" fill="#3d8ef5"/>
<text x="359.6" y="303.0" font-family="Liberation Sans" font-size="15.6" font-weight="normal" font-style="normal" fill="#222" textLength="73.1" lengthAdjust="spacingAndGlyphs">type: string</text>
<text x="337.5" y="335.1" font-family="Liberation Sans" font-size="14" font-weight="normal" font-style="normal" fill="#1a1a1a">+</text>
<circle cx="353" cy="330.2" r="2.1" fill="#3d8ef5"/>
<text x="358.5" y="335.5" font-family="Liberation Sans" font-size="15.6" font-weight="normal" font-style="normal" fill="#222" textLength="134.2" lengthAdjust="spacingAndGlyphs">run (param: ...) : void</text>
<text x="337.5" y="369.1" font-family="Liberation Sans" font-size="14" font-weight="normal" font-style="normal" fill="#1a1a1a">+</text>
<circle cx="353" cy="364.2" r="2.1" fill="#3d8ef5"/>
<text x="358.5" y="369.5" font-family="Liberation Sans" font-size="15.6" font-weight="normal" font-style="normal" fill="#222" textLength="78.3" lengthAdjust="spacingAndGlyphs">stop () : void</text>
<rect x="605.5" y="321.5" width="268" height="199" rx="5" fill="#faf8e2" stroke="#2b2a1e" stroke-width="1"/>
<path d="M605.5,351.5 V326.5 a5,5 0 0 1 5,-5 H868.5 a5,5 0 0 1 5,5 V351.5 Z" fill="#e3e0da" stroke="#2b2a1e" stroke-width="1"/>
<text x="728.6" y="341.2" font-family="Liberation Sans" font-size="14.5" font-weight="bold" font-style="normal" fill="#111" textLength="23.4" lengthAdjust="spacingAndGlyphs">Car</text>
<text x="859" y="342" font-family="Liberation Serif" font-size="14" fill="#222" text-anchor="middle">I</text>
<rect x="606" y="417" width="267" height="1" fill="#c9c8bd"/>
<text x="609.5" y="373.1" font-family="Liberation Sans" font-size="14" font-weight="normal" font-style="normal" fill="#1a1a1a">+</text>
<circle cx="626" cy="368.2" r="2.1" fill="#3d8ef5"/>
<text x="631.0" y="373.5" font-family="Liberation Sans" font-size="15.6" font-weight="normal" font-style="normal" fill="#222" textLength="98.3" lengthAdjust="spacingAndGlyphs">engine: Engine</text>
<text x="609.5" y="407.1" font-family="Liberation Sans" font-size="14" font-weight="normal" font-style="normal" fill="#1a1a1a">+</text>
<circle cx="626" cy="402.2" r="2.1" fill="#3d8ef5"/>
<text x="631.0" y="407.5" font-family="Liberation Sans" font-size="15.6" font-weight="normal" font-style="normal" fill="#222" textLength="60.2" lengthAdjust="spacingAndGlyphs">tyre: Tyre</text>
<text x="609.5" y="440.1" font-family="Liberation Sans" font-size="14" font-weight="normal" font-style="normal" fill="#1a1a1a">+</text>
<circle cx="626" cy="435.2" r="2.1" fill="#3d8ef5"/>
<text x="630.0" y="440.5" font-family="Liberation Sans" font-size="15.6" font-weight="normal" font-style="normal" fill="#222" textLength="71.6" lengthAdjust="spacingAndGlyphs">run () : void</text>
<text x="609.5" y="474.1" font-family="Liberation Sans" font-size="14" font-weight="normal" font-style="normal" fill="#1a1a1a">+</text>
<circle cx="626" cy="469.2" r="2.1" fill="#3d8ef5"/>
<text x="630.0" y="474.5" font-family="Liberation Sans" font-size="15.6" font-weight="normal" font-style="normal" fill="#222" textLength="78.5" lengthAdjust="spacingAndGlyphs">stop () : void</text>
<text x="609.5" y="507.1" font-family="Liberation Sans" font-size="14" font-weight="normal" font-style="normal" fill="#1a1a1a">+</text>
<circle cx="626" cy="502.2" r="2.1" fill="#3d8ef5"/>
<text x="630.0" y="507.5" font-family="Liberation Sans" font-size="15.6" font-weight="normal" font-style="normal" fill="#222" textLength="212.4" lengthAdjust="spacingAndGlyphs">playMusic (musicName:...) : void</text>
<rect x="949.5" y="250.5" width="205" height="131" rx="5" fill="#faf8e2" stroke="#2b2a1e" stroke-width="1"/>
<path d="M949.5,280.5 V255.5 a5,5 0 0 1 5,-5 H1149.5 a5,5 0 0 1 5,5 V280.5 Z" fill="#e3e0da" stroke="#2b2a1e" stroke-width="1"/>
<text x="1037.5" y="270.2" font-family="Liberation Sans" font-size="14.5" font-weight="bold" font-style="normal" fill="#111" textLength="29.2" lengthAdjust="spacingAndGlyphs">Tyre</text>
<text x="1139" y="271" font-family="Liberation Serif" font-size="14" fill="#222" text-anchor="middle">I</text>
<rect x="950" y="346" width="204" height="1" fill="#c9c8bd"/>
<text x="953.0" y="302.6" font-family="Liberation Sans" font-size="14" font-weight="normal" font-style="normal" fill="#1a1a1a">+</text>
<circle cx="969" cy="297.7" r="2.1" fill="#3d8ef5"/>
<text x="975.0" y="303.0" font-family="Liberation Sans" font-size="15.6" font-weight="normal" font-style="normal" fill="#222" textLength="74.0" lengthAdjust="spacingAndGlyphs">type: string</text>
<text x="953.0" y="335.1" font-family="Liberation Sans" font-size="14" font-weight="normal" font-style="normal" fill="#1a1a1a">+</text>
<circle cx="969" cy="330.2" r="2.1" fill="#3d8ef5"/>
<text x="975.0" y="335.5" font-family="Liberation Sans" font-size="15.6" font-weight="normal" font-style="normal" fill="#222" textLength="101.0" lengthAdjust="spacingAndGlyphs">rubber: Rubber</text>
<text x="953.0" y="369.1" font-family="Liberation Sans" font-size="14" font-weight="normal" font-style="normal" fill="#1a1a1a">+</text>
<circle cx="969" cy="364.2" r="2.1" fill="#3d8ef5"/>
<text x="973.8" y="369.5" font-family="Liberation Sans" font-size="15.6" font-weight="normal" font-style="normal" fill="#222" textLength="159.2" lengthAdjust="spacingAndGlyphs">rotate (gasoline... ) : void</text>
<rect x="1251.5" y="250.5" width="147" height="71" rx="5" fill="#faf8e2" stroke="#2b2a1e" stroke-width="1"/>
<path d="M1251.5,280.5 V255.5 a5,5 0 0 1 5,-5 H1393.5 a5,5 0 0 1 5,5 V280.5 Z" fill="#e3e0da" stroke="#2b2a1e" stroke-width="1"/>
<text x="1275.0" y="270.2" font-family="Liberation Sans" font-size="14.5" font-weight="bold" font-style="normal" fill="#111" textLength="100.0" lengthAdjust="spacingAndGlyphs">CommonRubber</text>
<text x="1384" y="271" font-family="Liberation Serif" font-size="14" fill="#222" text-anchor="middle">I</text>
<text x="1256.0" y="307.1" font-family="Liberation Sans" font-size="14" font-weight="normal" font-style="normal" fill="#1a1a1a">+</text>
<circle cx="1272" cy="302.2" r="2.1" fill="#3d8ef5"/>
<text x="1277.3" y="307.5" font-family="Liberation Sans" font-size="15.6" font-weight="normal" font-style="normal" fill="#222" textLength="74.0" lengthAdjust="spacingAndGlyphs">type: string</text>
<rect x="313.5" y="476.5" width="187" height="128" rx="5" fill="#faf8e2" stroke="#2b2a1e" stroke-width="1"/>
<path d="M313.5,506.5 V481.5 a5,5 0 0 1 5,-5 H495.5 a5,5 0 0 1 5,5 V506.5 Z" fill="#e3e0da" stroke="#2b2a1e" stroke-width="1"/>
<text x="353.3" y="496.2" font-family="Liberation Sans" font-size="14.5" font-weight="bold" font-style="normal" fill="#111" textLength="107.7" lengthAdjust="spacingAndGlyphs">GasolineEngine</text>
<text x="485" y="497" font-family="Liberation Sans" font-style="italic" font-size="15" fill="#333" text-anchor="middle">C</text>
<rect x="314" y="537" width="186" height="1" fill="#c9c8bd"/>
<text x="316.5" y="527.1" font-family="Liberation Sans" font-size="14" font-weight="normal" font-style="normal" fill="#1a1a1a">+</text>
<circle cx="333" cy="522.2" r="2.1" fill="#3d8ef5"/>
<text x="338.7" y="527.5" font-family="Liberation Sans" font-size="15.6" font-weight="normal" font-style="normal" fill="#222" textLength="75.0" lengthAdjust="spacingAndGlyphs">type: string</text>
<text x="316.5" y="559.1" font-family="Liberation Sans" font-size="14" font-weight="normal" font-style="normal" fill="#1a1a1a">+</text>
<circle cx="333" cy="554.2" r="2.1" fill="#3d8ef5"/>
<text x="338.3" y="559.5" font-family="Liberation Sans" font-size="15.6" font-weight="normal" font-style="normal" fill="#222" textLength="134.8" lengthAdjust="spacingAndGlyphs">run (gasolin... ) : void</text>
<text x="316.5" y="591.6" font-family="Liberation Sans" font-size="14" font-weight="normal" font-style="normal" fill="#1a1a1a">+</text>
<circle cx="333" cy="586.7" r="2.1" fill="#3d8ef5"/>
<text x="338.3" y="592.0" font-family="Liberation Sans" font-size="15.6" font-weight="normal" font-style="normal" fill="#222" textLength="78.8" lengthAdjust="spacingAndGlyphs">stop () : void</text>
<rect x="584.5" y="641.5" width="253" height="174" rx="5" fill="#faf8e2" stroke="#2b2a1e" stroke-width="1"/>
<path d="M584.5,671.5 V646.5 a5,5 0 0 1 5,-5 H832.5 a5,5 0 0 1 5,5 V671.5 Z" fill="#e3e0da" stroke="#2b2a1e" stroke-width="1"/>
<text x="669.6" y="661.2" font-family="Liberation Sans" font-size="14.5" font-weight="bold" font-style="normal" fill="#111" textLength="83.4" lengthAdjust="spacingAndGlyphs">GasolineCar</text>
<text x="822" y="662" font-family="Liberation Sans" font-style="italic" font-size="15" fill="#333" text-anchor="middle">C</text>
<rect x="585" y="728" width="252" height="1" fill="#c9c8bd"/>
<text x="588.5" y="689.6" font-family="Liberation Sans" font-size="14" font-weight="normal" font-style="normal" fill="#1a1a1a">+</text>
<circle cx="605" cy="684.7" r="2.1" fill="#3d8ef5"/>
<text x="610.1" y="690.0" font-family="Liberation Sans" font-size="15.6" font-weight="normal" font-style="normal" fill="#222" textLength="97.9" lengthAdjust="spacingAndGlyphs">engine: Engine</text>
<text x="588.5" y="717.6" font-family="Liberation Sans" font-size="14" font-weight="normal" font-style="normal" fill="#1a1a1a">+</text>
<circle cx="605" cy="712.7" r="2.1" fill="#3d8ef5"/>
<text x="610.1" y="718.0" font-family="Liberation Sans" font-size="15.6" font-weight="normal" font-style="normal" fill="#222" textLength="59.9" lengthAdjust="spacingAndGlyphs">tyre: Tyre</text>
<text x="588.5" y="749.6" font-family="Liberation Sans" font-size="14" font-weight="normal" font-style="normal" fill="#1a1a1a">+</text>
<circle cx="605" cy="744.7" r="2.1" fill="#3d8ef5"/>
<text x="610.1" y="750.0" font-family="Liberation Sans" font-size="15.6" font-weight="normal" font-style="normal" fill="#222" textLength="70.9" lengthAdjust="spacingAndGlyphs">run () : void</text>
<text x="588.5" y="775.6" font-family="Liberation Sans" font-size="14" font-weight="normal" font-style="normal" fill="#1a1a1a">+</text>
<circle cx="605" cy="770.7" r="2.1" fill="#3d8ef5"/>
<text x="610.1" y="776.0" font-family="Liberation Sans" font-size="15.6" font-weight="normal" font-style="normal" fill="#222" textLength="77.9" lengthAdjust="spacingAndGlyphs">stop () : void</text>
<text x="588.5" y="801.6" font-family="Liberation Sans" font-size="14" font-weight="normal" font-style="normal" fill="#1a1a1a">+</text>
<circle cx="605" cy="796.7" r="2.1" fill="#3d8ef5"/>
<text x="610.1" y="802.0" font-family="Liberation Sans" font-size="15.6" font-weight="normal" font-style="normal" fill="#222" textLength="209.9" lengthAdjust="spacingAndGlyphs">playMusic (musicName:...) : void</text>
<rect x="951.5" y="494.5" width="205" height="140" rx="5" fill="#faf8e2" stroke="#2b2a1e" stroke-width="1"/>
<path d="M951.5,524.5 V499.5 a5,5 0 0 1 5,-5 H1151.5 a5,5 0 0 1 5,5 V524.5 Z" fill="#e3e0da" stroke="#2b2a1e" stroke-width="1"/>
<text x="981.3" y="513.2" font-family="Liberation Sans" font-size="14.5" font-weight="bold" font-style="normal" fill="#111" textLength="145.7" lengthAdjust="spacingAndGlyphs">CommonRubberTyre</text>
<text x="1141" y="514" font-family="Liberation Sans" font-style="italic" font-size="15" fill="#333" text-anchor="middle">C</text>
<rect x="952" y="597" width="204" height="1" fill="#c9c8bd"/>
<text x="955.0" y="547.1" font-family="Liberation Sans" font-size="14" font-weight="normal" font-style="normal" fill="#1a1a1a">+</text>
<circle cx="971" cy="542.2" r="2.1" fill="#3d8ef5"/>
<text x="976.8" y="547.5" font-family="Liberation Sans" font-size="15.6" font-weight="normal" font-style="normal" fill="#222" textLength="74.6" lengthAdjust="spacingAndGlyphs">type: string</text>
<text x="955.0" y="584.1" font-family="Liberation Sans" font-size="14" font-weight="normal" font-style="normal" fill="#1a1a1a">+</text>
<circle cx="971" cy="579.2" r="2.1" fill="#3d8ef5"/>
<text x="976.8" y="584.5" font-family="Liberation Sans" font-size="15.6" font-weight="normal" font-style="normal" fill="#222" textLength="101.6" lengthAdjust="spacingAndGlyphs">rubber: Rubber</text>
<text x="955.0" y="620.1" font-family="Liberation Sans" font-size="14" font-weight="normal" font-style="normal" fill="#1a1a1a">+</text>
<circle cx="971" cy="615.2" r="2.1" fill="#3d8ef5"/>
<text x="975.8" y="620.5" font-family="Liberation Sans" font-size="15.6" font-weight="normal" font-style="normal" fill="#222" textLength="160.2" lengthAdjust="spacingAndGlyphs">rotate (gasoline... ) : void</text>
<rect x="1238.5" y="440.5" width="173" height="68" rx="5" fill="#faf8e2" stroke="#2b2a1e" stroke-width="1"/>
<path d="M1238.5,470.5 V445.5 a5,5 0 0 1 5,-5 H1406.5 a5,5 0 0 1 5,5 V470.5 Z" fill="#e3e0da" stroke="#2b2a1e" stroke-width="1"/>
<text x="1267.5" y="460.2" font-family="Liberation Sans" font-size="14.5" font-weight="bold" font-style="normal" fill="#111" textLength="110.0" lengthAdjust="spacingAndGlyphs">CommonRubber</text>
<text x="1395" y="461" font-family="Liberation Sans" font-style="italic" font-size="15" fill="#333" text-anchor="middle">C</text>
<text x="1242.0" y="494.1" font-family="Liberation Sans" font-size="14" font-weight="normal" font-style="normal" fill="#1a1a1a">+</text>
<circle cx="1259" cy="489.2" r="2.1" fill="#3d8ef5"/>
<text x="1264.3" y="494.5" font-family="Liberation Sans" font-size="15.6" font-weight="normal" font-style="normal" fill="#222" textLength="74.2" lengthAdjust="spacingAndGlyphs">type: string</text>
<rect x="530" y="319" width="68" height="19" fill="#fff"/><text x="533.0" y="332.5" font-family="Liberation Sans" font-size="14.3" font-weight="normal" font-style="normal" fill="#333" textLength="62.0" lengthAdjust="spacingAndGlyphs">aggregate</text>
<rect x="880" y="346" width="66" height="15" fill="#fff"/><text x="881.8" y="356.5" font-family="Liberation Sans" font-size="14.3" font-weight="normal" font-style="normal" fill="#333" textLength="61.7" lengthAdjust="spacingAndGlyphs">aggregate</text>
<rect x="374" y="417" width="75" height="22" fill="#fff"/><text x="376.0" y="432.5" font-family="Liberation Sans" font-size="14.3" font-weight="normal" font-style="normal" fill="#333" textLength="71.0" lengthAdjust="spacingAndGlyphs">implements</text>
<rect x="517" y="507" width="78" height="20" fill="#fff"/><text x="518.4" y="520.5" font-family="Liberation Sans" font-size="14.3" font-weight="normal" font-style="normal" fill="#333" textLength="74.6" lengthAdjust="spacingAndGlyphs">dependency</text>
<rect x="693" y="576" width="74" height="22" fill="#fff"/><text x="694.6" y="591.5" font-family="Liberation Sans" font-size="14.3" font-weight="normal" font-style="normal" fill="#333" textLength="71.3" lengthAdjust="spacingAndGlyphs">implements</text>
<rect x="864" y="498" width="77" height="22" fill="#fff"/><text x="864.6" y="512.5" font-family="Liberation Sans" font-size="14.3" font-weight="normal" font-style="normal" fill="#333" textLength="75.4" lengthAdjust="spacingAndGlyphs">dependency</text>
<rect x="445" y="640" width="63" height="21.5" fill="#fff"/><text x="445.6" y="656.0" font-family="Liberation Sans" font-size="14.3" font-weight="normal" font-style="normal" fill="#333" textLength="62.0" lengthAdjust="spacingAndGlyphs">aggregate</text>
<rect x="864" y="630" width="65" height="21.5" fill="#fff"/><text x="865.6" y="645.5" font-family="Liberation Sans" font-size="14.3" font-weight="normal" font-style="normal" fill="#333" textLength="62.4" lengthAdjust="spacingAndGlyphs">aggregate</text>
<rect x="1015" y="426" width="76" height="22" fill="#fff"/><text x="1017.0" y="441.5" font-family="Liberation Sans" font-size="14.3" font-weight="normal" font-style="normal" fill="#333" textLength="72.0" lengthAdjust="spacingAndGlyphs">implements</text>
<rect x="1172" y="298" width="58" height="13" fill="#fff"/><text x="1173.4" y="308.5" font-family="Liberation Sans" font-size="14.3" font-weight="normal" font-style="normal" fill="#333" textLength="55.3" lengthAdjust="spacingAndGlyphs">compose</text>
<rect x="1163" y="397" width="76" height="21" fill="#fff"/><text x="1163.7" y="412.5" font-family="Liberation Sans" font-size="14.3" font-weight="normal" font-style="normal" fill="#333" textLength="74.7" lengthAdjust="spacingAndGlyphs">dependency</text>
<rect x="1284" y="374" width="76" height="23" fill="#fff"/><text x="1286.0" y="389.5" font-family="Liberation Sans" font-size="14.3" font-weight="normal" font-style="normal" fill="#333" textLength="72.0" lengthAdjust="spacingAndGlyphs">implements</text>
<rect x="1166" y="508" width="57" height="21" fill="#fff"/><text x="1166.8" y="522.5" font-family="Liberation Sans" font-size="14.3" font-weight="normal" font-style="normal" fill="#333" textLength="55.2" lengthAdjust="spacingAndGlyphs">compose</text>
</g></svg>
<rect x="1182.4" y="149.7" width="143" height="70.3" fill="none" stroke="#18b4ef" stroke-width="2"/>
<rect x="1351" y="251" width="3" height="29" fill="#e3e0da"/>
<text x="1301.0" y="688.0" font-family="Liberation Sans" font-size="9" font-weight="normal" font-style="normal" fill="#777" textLength="46.0" lengthAdjust="spacingAndGlyphs">X: 80, Y: 61</text>
<path d="M1360,450.5 L1356,455.7 L1360,461 M1364.5,450.5 L1360.5,455.7 L1364.5,461" fill="none" stroke="#333" stroke-width="1.2"/>
</svg></body></html>
